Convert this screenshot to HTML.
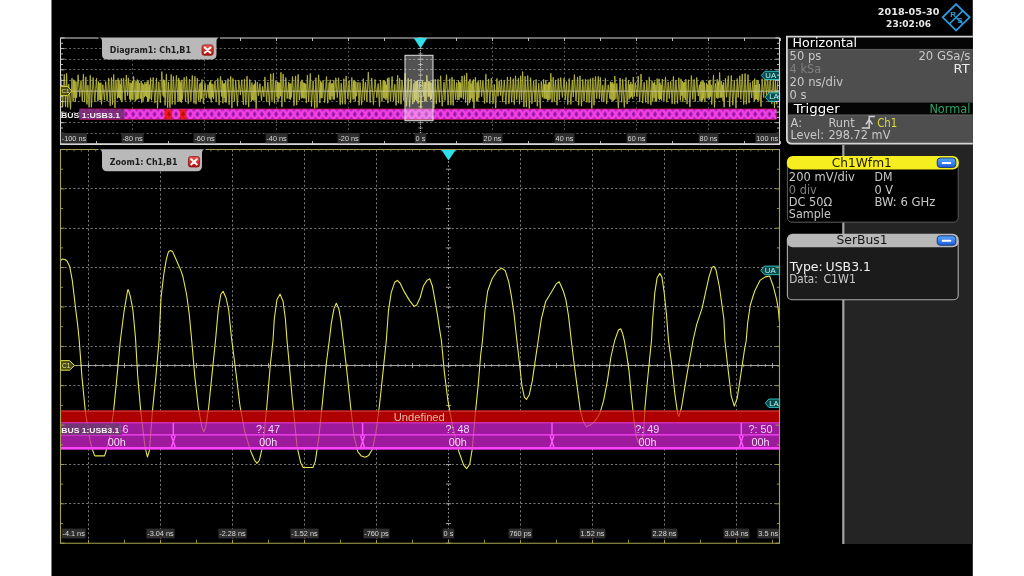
<!DOCTYPE html>
<html lang="en"><head><meta charset="utf-8"><title>Oscilloscope USB3.1 decode</title>
<style>
html,body{margin:0;padding:0;background:#fff;}
body{width:1024px;height:576px;overflow:hidden;position:relative;}
svg{position:absolute;left:0;top:0;display:block;will-change:transform;transform:translateZ(0);}
text{font-family:"DejaVu Sans","Liberation Sans",sans-serif;}
.ar{font-family:"Liberation Sans","DejaVu Sans",sans-serif;}
.b{font-weight:bold;}
</style></head><body>
<svg width="1024" height="576" viewBox="0 0 1024 576">
<defs>
<pattern id="dia" x="79.5" y="109.4" width="7.15" height="9.6" patternUnits="userSpaceOnUse"><rect width="7.15" height="9.6" fill="#f040e8"/><path d="M3.575 1.7 L5.6 4.8 L3.575 7.9 L1.55 4.8 Z" fill="#9c169e"/><path d="M-2 0 L2 0 L0 2.7 Z M5.15 0 L9.15 0 L7.15 2.7 Z M-2 9.6 L2 9.6 L0 6.9 Z M5.15 9.6 L9.15 9.6 L7.15 6.9 Z" fill="#b422b6"/></pattern>
<pattern id="diar" x="79.5" y="109.4" width="7.15" height="9.6" patternUnits="userSpaceOnUse"><rect width="7.15" height="9.6" fill="#ee1c1c"/><path d="M3.575 1.7 L5.6 4.8 L3.575 7.9 L1.55 4.8 Z" fill="#b40c0c"/><path d="M-2 0 L2 0 L0 2.7 Z M5.15 0 L9.15 0 L7.15 2.7 Z M-2 9.6 L2 9.6 L0 6.9 Z M5.15 9.6 L9.15 9.6 L7.15 6.9 Z" fill="#c81414"/></pattern>
<linearGradient id="redg" x1="0" y1="0" x2="0" y2="1"><stop offset="0" stop-color="#f05a50"/><stop offset="1" stop-color="#b00808"/></linearGradient>
<linearGradient id="blug" x1="0" y1="0" x2="0" y2="1"><stop offset="0" stop-color="#58a8ff"/><stop offset="1" stop-color="#1c5ee0"/></linearGradient>
<clipPath id="c1"><rect x="60" y="37" width="720" height="107"/></clipPath>
<clipPath id="c2"><rect x="60" y="149" width="720" height="395"/></clipPath>
</defs>
<rect x="0" y="0" width="1024" height="576" fill="#ffffff"/>
<rect x="51.5" y="0" width="921.3" height="576" fill="#000000"/>
<g id="diagram1">
<line x1="60.5" y1="48.5" x2="779.5" y2="48.5" stroke="#7c7c7c" stroke-width="1" stroke-dasharray="2 2.3" opacity="0.85"/>
<line x1="60.5" y1="59.5" x2="779.5" y2="59.5" stroke="#7c7c7c" stroke-width="1" stroke-dasharray="2 2.3" opacity="0.85"/>
<line x1="60.5" y1="69.5" x2="779.5" y2="69.5" stroke="#7c7c7c" stroke-width="1" stroke-dasharray="2 2.3" opacity="0.85"/>
<line x1="60.5" y1="80.5" x2="779.5" y2="80.5" stroke="#7c7c7c" stroke-width="1" stroke-dasharray="2 2.3" opacity="0.85"/>
<line x1="60.5" y1="90.5" x2="779.5" y2="90.5" stroke="#7c7c7c" stroke-width="1" stroke-dasharray="2 2.3" opacity="0.85"/>
<line x1="60.5" y1="101.5" x2="779.5" y2="101.5" stroke="#7c7c7c" stroke-width="1" stroke-dasharray="2 2.3" opacity="0.85"/>
<line x1="60.5" y1="112.5" x2="779.5" y2="112.5" stroke="#7c7c7c" stroke-width="1" stroke-dasharray="2 2.3" opacity="0.85"/>
<line x1="60.5" y1="122.5" x2="779.5" y2="122.5" stroke="#7c7c7c" stroke-width="1" stroke-dasharray="2 2.3" opacity="0.85"/>
<line x1="60.5" y1="133.5" x2="779.5" y2="133.5" stroke="#7c7c7c" stroke-width="1" stroke-dasharray="2 2.3" opacity="0.85"/>
<line x1="132.5" y1="38.0" x2="132.5" y2="144.1" stroke="#7c7c7c" stroke-width="1" stroke-dasharray="1.8 2.5" opacity="0.75"/>
<line x1="204.5" y1="38.0" x2="204.5" y2="144.1" stroke="#7c7c7c" stroke-width="1" stroke-dasharray="1.8 2.5" opacity="0.75"/>
<line x1="276.5" y1="38.0" x2="276.5" y2="144.1" stroke="#7c7c7c" stroke-width="1" stroke-dasharray="1.8 2.5" opacity="0.75"/>
<line x1="348.5" y1="38.0" x2="348.5" y2="144.1" stroke="#7c7c7c" stroke-width="1" stroke-dasharray="1.8 2.5" opacity="0.75"/>
<line x1="420.5" y1="48.0" x2="420.5" y2="144.1" stroke="#b0b0b0" stroke-width="1" stroke-dasharray="1.2 0.9"/>
<line x1="418.3" y1="38" x2="422.7" y2="38" stroke="#bcbcbc" stroke-width="0.8"/>
<line x1="418.3" y1="43.3" x2="422.7" y2="43.3" stroke="#bcbcbc" stroke-width="0.8"/>
<line x1="418.3" y1="48.6" x2="422.7" y2="48.6" stroke="#bcbcbc" stroke-width="0.8"/>
<line x1="418.3" y1="53.9" x2="422.7" y2="53.9" stroke="#bcbcbc" stroke-width="0.8"/>
<line x1="418.3" y1="59.2" x2="422.7" y2="59.2" stroke="#bcbcbc" stroke-width="0.8"/>
<line x1="418.3" y1="64.5" x2="422.7" y2="64.5" stroke="#bcbcbc" stroke-width="0.8"/>
<line x1="418.3" y1="69.8" x2="422.7" y2="69.8" stroke="#bcbcbc" stroke-width="0.8"/>
<line x1="418.3" y1="75.1" x2="422.7" y2="75.1" stroke="#bcbcbc" stroke-width="0.8"/>
<line x1="418.3" y1="80.4" x2="422.7" y2="80.4" stroke="#bcbcbc" stroke-width="0.8"/>
<line x1="418.3" y1="85.7" x2="422.7" y2="85.7" stroke="#bcbcbc" stroke-width="0.8"/>
<line x1="418.3" y1="91" x2="422.7" y2="91" stroke="#bcbcbc" stroke-width="0.8"/>
<line x1="418.3" y1="96.2" x2="422.7" y2="96.2" stroke="#bcbcbc" stroke-width="0.8"/>
<line x1="418.3" y1="101.5" x2="422.7" y2="101.5" stroke="#bcbcbc" stroke-width="0.8"/>
<line x1="418.3" y1="106.8" x2="422.7" y2="106.8" stroke="#bcbcbc" stroke-width="0.8"/>
<line x1="418.3" y1="112.1" x2="422.7" y2="112.1" stroke="#bcbcbc" stroke-width="0.8"/>
<line x1="418.3" y1="117.4" x2="422.7" y2="117.4" stroke="#bcbcbc" stroke-width="0.8"/>
<line x1="418.3" y1="122.7" x2="422.7" y2="122.7" stroke="#bcbcbc" stroke-width="0.8"/>
<line x1="418.3" y1="128" x2="422.7" y2="128" stroke="#bcbcbc" stroke-width="0.8"/>
<line x1="418.3" y1="133.3" x2="422.7" y2="133.3" stroke="#bcbcbc" stroke-width="0.8"/>
<line x1="418.3" y1="138.6" x2="422.7" y2="138.6" stroke="#bcbcbc" stroke-width="0.8"/>
<line x1="418.3" y1="143.9" x2="422.7" y2="143.9" stroke="#bcbcbc" stroke-width="0.8"/>
<line x1="492.5" y1="38.0" x2="492.5" y2="144.1" stroke="#7c7c7c" stroke-width="1" stroke-dasharray="1.8 2.5" opacity="0.75"/>
<line x1="564.5" y1="38.0" x2="564.5" y2="144.1" stroke="#7c7c7c" stroke-width="1" stroke-dasharray="1.8 2.5" opacity="0.75"/>
<line x1="636.5" y1="38.0" x2="636.5" y2="144.1" stroke="#7c7c7c" stroke-width="1" stroke-dasharray="1.8 2.5" opacity="0.75"/>
<line x1="708.5" y1="38.0" x2="708.5" y2="144.1" stroke="#7c7c7c" stroke-width="1" stroke-dasharray="1.8 2.5" opacity="0.75"/>
<g clip-path="url(#c1)"><path d="M60.9 77.5 L62.6 106.9 L64.3 74.4 L65.5 106.7 L66.6 73.4 L67.7 107.3 L68.8 84.2 L70.5 109.3 L72 78.2 L73.1 101.5 L73.7 79.8 L74.2 97.5 L74.8 81 L75.3 101.7 L76 81.8 L76.6 97.7 L78.1 74.9 L79.7 96.7 L81 80.6 L82.3 101.2 L83.4 74.2 L84.6 102 L85.9 76.9 L86.9 104.3 L87.9 85.1 L89.1 107.2 L90.3 75.4 L91.4 107.2 L93.1 77.6 L94.8 101.7 L96.5 78.3 L97.9 101.2 L98.5 81.7 L99.1 99.8 L99.8 83 L100.5 100 L100.9 82.8 L101.5 104.2 L102.8 84.7 L104.4 99.8 L105.7 81.6 L107.1 101 L108.7 78.1 L110.2 105.8 L111.5 77.7 L112.5 104.6 L113.7 74.5 L115 107.8 L115.9 80 L117.5 98.2 L118.1 78.3 L118.6 97.3 L119.1 80.3 L119.7 98 L120.3 84.4 L120.7 100 L121.3 78.5 L121.9 102 L123.6 78.2 L125.2 100.3 L126.4 75.1 L127.5 95.6 L128.4 78 L129.6 99.2 L130.1 82.6 L130.7 100.9 L131.3 83.2 L131.9 99.1 L132.4 80.9 L133 99.8 L133.6 76.4 L135.3 101.1 L135.9 81.3 L136.6 99.8 L137.2 79.6 L137.7 98.9 L138.2 80.8 L138.8 98.7 L139.3 83.1 L140.6 98.5 L141.2 81 L141.7 102.8 L142.4 83.4 L143.1 100.8 L143.7 84.6 L144.3 97.1 L144.9 82.3 L145.5 96 L146 84 L146.6 96.9 L147 81.8 L147.6 101.4 L148.1 80.5 L148.7 101.4 L149.3 84.8 L149.8 98.8 L150.5 77.8 L151.5 100.1 L153.2 77.6 L154.9 102.9 L156.5 78.1 L157.5 108.2 L158.8 81.9 L160.4 102.5 L161.8 71.7 L163 95.5 L163.5 79.7 L164 97.3 L164.6 80.6 L165.1 105.2 L166.4 74.2 L167.6 107.6 L168.5 82.2 L170 107.7 L171.2 74.5 L172.2 104.3 L173.4 76.4 L175 104.4 L176.4 75.5 L178 101.6 L178.7 78.1 L179.3 101.2 L179.8 80.3 L180.4 101.9 L180.8 82.6 L181.4 102.6 L181.9 79.9 L182.4 99.5 L184.2 77.4 L185.5 101.3 L186.5 76.6 L188.3 103.6 L189.4 79.3 L190.9 100.7 L192.3 75.5 L194 103.2 L194.9 76.3 L196 104.1 L197.3 78.4 L198.5 100.6 L199.8 83.8 L200.3 101.8 L201 82.7 L201.6 98.6 L202 79.6 L203.4 103.7 L205 83.2 L206.3 98 L208 84.7 L209 97.5 L209.6 82.4 L210.1 98.9 L210.7 80.4 L211.2 102.3 L211.9 83.7 L212.4 97 L212.9 84.4 L213.5 98.9 L215 80.9 L216.2 101.9 L217.8 78.4 L219.1 104.9 L220.5 76.5 L221.8 96.5 L222.3 80.6 L222.9 103.2 L223.5 83.7 L224.2 97.7 L224.6 83.3 L225.2 102.1 L225.8 80.6 L226.2 102.4 L228 78.7 L229.1 104.6 L230.7 76.3 L231.9 108 L232.9 78.4 L234.4 101.3 L235.7 80.1 L237.4 106.1 L238.8 80 L240.4 95 L241.7 79.9 L243.4 104.5 L244.4 79.2 L245.9 104.7 L247 76.2 L248.7 107 L249.7 79.6 L251.4 101 L251.9 82.7 L252.5 99.9 L253.2 85.5 L253.8 100.5 L254.3 83.9 L255 100.1 L255.4 80.9 L256.1 108.9 L257.3 82.1 L258.6 95.6 L259.9 83.6 L261.5 100.4 L262.5 86.4 L263.9 96.7 L264.9 77 L266.6 101.5 L267.8 82.3 L269.5 105.3 L270.7 73.9 L272 100.6 L273.4 73.3 L274.4 103.2 L275.8 80.8 L277 97.3 L277.5 81.9 L278 101.9 L278.7 82.5 L279.1 98.3 L279.8 82.9 L280.5 96.1 L280.9 72.4 L281.9 106.9 L283.1 74.1 L284.7 101.4 L285.8 77.7 L287.2 98.4 L288.7 82.2 L289.2 99 L289.8 83.6 L290.4 99.7 L290.9 83.7 L291.3 97.3 L292.5 76.5 L294 105.7 L295.6 76 L296.6 105 L298.2 74.4 L299.3 100.1 L301 81.4 L301.4 98.3 L302 79.8 L302.7 97.6 L303.2 82.6 L303.8 98.3 L304.4 83.2 L305 98.2 L305.6 83.8 L306.3 102.9 L307.4 75.1 L308.6 101.7 L310.3 73.5 L311.5 106.4 L313.1 80.9 L314.7 108.6 L315.9 77.8 L317 107.5 L318.6 74.9 L319.9 103 L320.6 81.2 L321 97.9 L321.5 82.7 L322 98.1 L323 80.6 L324.7 102.5 L326.5 76.6 L327.7 103.1 L329.1 82.6 L329.7 99.3 L330.2 79.9 L330.8 100.1 L331.4 83.7 L332 96.1 L332.7 83.3 L333.2 99.3 L333.8 80.4 L334.3 99.3 L335.8 77.9 L337.3 97.6 L338.5 77.9 L340.2 104.6 L341.2 83.2 L342.5 104.1 L343.8 78.9 L345.2 104.2 L346.1 76 L347.9 98.7 L349.1 81 L350.6 102.6 L351.8 77.6 L353.1 99.4 L353.6 80.9 L354.1 98.4 L354.7 80.6 L355.3 101.3 L355.9 81.9 L356.5 96.2 L358 82.3 L359.1 105.2 L360 82.7 L361.6 104.5 L363.3 78.7 L364.4 100.2 L365.5 82.1 L366.9 101.4 L368.3 72.2 L370.1 102.4 L371.7 78 L373.4 104.6 L375 79.6 L376.8 97.5 L378.2 83.7 L379.5 106.6 L380.5 80 L382 101.4 L383.2 80.4 L383.7 97.9 L384.3 80.6 L384.8 98.4 L385.3 81.7 L385.9 99.9 L386.4 84.9 L386.9 97.8 L387.4 78.4 L387.9 103.1 L388.9 77.6 L390.5 101.2 L392.1 76.6 L393.5 101 L394.8 84.3 L396.1 105.4 L397.6 75.4 L398.6 103.1 L399.6 78.3 L401 104.1 L402 80 L403.7 100.5 L405 73.2 L406.5 106.1 L408.2 78.6 L409.6 107.1 L411.1 79.1 L412.8 104 L413.9 83.5 L414.4 101.5 L415.1 81.4 L415.7 99.7 L416.3 81.2 L416.8 101.2 L417.4 80.5 L418.1 103.5 L419.3 81.6 L420.9 108.6 L422.4 80.9 L423.8 96.5 L424.2 82.2 L424.9 101.6 L425.6 82 L426.1 100.9 L426.8 75.2 L428.2 96.7 L428.7 81.3 L429.2 96.4 L429.8 81.6 L430.5 99.8 L431 82.8 L431.5 98.7 L433 79.8 L433.9 108.5 L435.2 79.3 L436.3 103.9 L437.9 79.4 L439.4 102.2 L440.6 75.9 L442.2 106.1 L444 82.3 L445 100.3 L446.5 74.8 L448.1 105 L449.8 78.8 L450.9 104.9 L452 77.1 L453.2 105.3 L454.2 79.7 L455.7 99.5 L456.7 82.5 L457.8 99.9 L458.5 80.3 L459.1 99.7 L459.7 82.1 L460.1 97.2 L460.7 82.7 L461.4 97.6 L462 76 L463.4 99.1 L464.4 75.6 L465.6 102.4 L466.7 73 L467.7 105.3 L468.9 81.3 L469.4 102.9 L470 79.1 L470.5 100.2 L471.1 83.6 L471.8 98.1 L472.3 80.8 L472.9 101.6 L473.4 79.5 L473.9 108.4 L475.4 77.4 L476.6 101.2 L477.2 82.5 L477.8 101.2 L478.3 80.9 L478.8 97.7 L480.5 80 L481.6 96.5 L482.9 80.9 L484.6 103.4 L485.9 74.2 L486.9 102.3 L488.6 79.1 L489.8 103.5 L491.4 78.1 L493.1 103.4 L494.3 84.4 L495.7 108.1 L496.9 78.5 L498 96.2 L499.2 81 L500.5 95.4 L501.5 79.8 L502.6 102 L504.3 80.4 L505.9 104.2 L507.4 77.1 L508.9 103.7 L510.5 77.2 L511.6 102.1 L513.3 78.8 L514.3 104.5 L515.5 75.9 L516.7 99.5 L518.4 78.4 L519.5 104.1 L520.6 75.9 L521.6 100.1 L522.6 71.7 L523.9 107 L525.1 76.4 L526.4 107 L527.7 75.7 L529.3 108.7 L530.6 77.8 L531.9 103.7 L533.6 80.9 L535.1 101.7 L536.1 79.5 L537.3 106.2 L538.7 83.2 L540.3 108.8 L541.3 81.5 L542.6 97.1 L543.6 79.4 L544.1 98.6 L544.6 84.4 L545.2 98.4 L545.8 80 L546.4 98.8 L547.1 84.5 L547.7 100.5 L548.4 82.8 L548.9 100.1 L549.4 82.1 L550.1 98.8 L550.8 73.3 L552.1 102.2 L553.2 77.4 L554.3 101.6 L555.5 80.2 L557 105 L558.2 78.6 L559.3 99.7 L560.7 77.7 L562.4 97.4 L564.1 78 L565.3 99.9 L566.5 81.8 L567.8 104.5 L569.2 78.5 L570.9 104.3 L572.3 80.1 L573.3 97 L574.4 74.7 L576 100.9 L577.6 77.1 L578.7 105.2 L580 75.9 L581.5 106 L582.8 79.5 L584 101.1 L585.5 79.1 L586.9 102.2 L588 79.6 L589.1 102.6 L590.4 78.6 L591.8 108.6 L592.9 77.9 L594 105.1 L595.5 76.5 L596.7 98.5 L598.3 76.4 L599.4 98.8 L600.4 77.6 L601.7 101.4 L602.8 85.2 L603.8 101.7 L605.4 78.4 L606.6 103.8 L608.2 84.9 L609.9 98.7 L610.4 81.8 L611 99.2 L611.5 82.7 L612.1 100.8 L612.7 82.3 L613.2 101.1 L613.8 84.1 L614.3 99.7 L614.8 76.1 L615.9 98.9 L616.8 83.5 L618.4 108.1 L620.1 78 L621.7 102.2 L622.7 79.4 L624.3 107.4 L626 77.6 L627.1 104 L628.5 80.4 L629.1 99.3 L629.6 84.7 L630.3 97.7 L630.8 82 L631.4 96.6 L632.1 84.3 L632.7 98.8 L633.3 77 L634.3 96.4 L635.4 82.8 L637 96.8 L638.2 76.2 L639.7 102 L641 74 L642.7 103 L644.1 82.4 L645.7 102.3 L646.8 80.5 L648.1 103.7 L649.3 77.1 L650.9 104.8 L652.1 80.8 L652.7 101.4 L653.3 83.1 L654 97.7 L654.7 81.8 L655.3 101.1 L655.9 85.2 L656.6 101.5 L657.1 78.7 L658.4 98.5 L659 78.9 L659.5 100 L660 82.9 L660.5 98.8 L661.1 85 L661.6 100.4 L662.3 79 L663.9 100.9 L665.5 77.2 L666.8 102.1 L668.2 82.1 L669.3 98.4 L670.7 81.5 L672.2 103.6 L673.4 76.5 L674.7 103.9 L675.9 80.2 L677.5 103.3 L678.8 77.8 L680.4 100.4 L681 79.1 L681.7 95.5 L682.3 81.2 L682.8 101.9 L683.5 82.7 L684.1 97.6 L684.8 82 L685.3 100.1 L685.9 79.3 L687 104 L688.4 79.9 L689.9 106.9 L691.4 75.7 L692.8 99.2 L694.1 79.5 L695.2 101.5 L696.7 77.6 L698.3 96 L699.4 84.8 L700 101.3 L700.7 81.9 L701.4 101.5 L702 81.3 L702.6 100.4 L703.1 80.5 L703.7 98.3 L704.3 82.7 L704.8 101.8 L706.5 83.2 L707.1 98.2 L707.8 84.5 L708.4 97.6 L708.9 80.5 L709.5 99.1 L710 80.2 L710.7 96.5 L711.3 85 L711.7 104.4 L713.5 75.1 L714.5 107.3 L715.5 83.5 L716.6 97.7 L717.2 79.3 L717.8 98.5 L718.4 81.6 L719 97.7 L719.6 72.6 L720.7 97.6 L721.3 81.1 L721.7 97.4 L722.4 85 L723 100.8 L723.4 82.5 L724.1 107.2 L725.5 78.3 L726.6 97.1 L728.3 75.8 L729.7 106.9 L731.3 75.5 L732.8 105.1 L734.3 80.2 L736 108.2 L737.2 78.7 L738.2 97.4 L739.8 75.8 L740.8 99.3 L742.3 74 L743.7 104.5 L745.1 73.6 L746.3 104.1 L748 74.6 L749 102.9 L750.1 82.6 L751.7 97.8 L752.8 81 L754.3 101.1 L754.7 78.6 L755.3 99.3 L755.9 85 L756.4 99 L756.9 80 L757.5 100.2 L758.1 80.7 L758.8 100.7 L759.4 84 L761 106.6 L762.1 78.8 L763.7 97.5 L764.9 76.5 L766.5 96.4 L767.6 76.1 L768.9 101.9 L770.2 76 L771.8 103.8 L773.3 78.9 L774.5 108 L775.4 79.9 L776.8 104.1 L777.9 77" fill="none" stroke="#7c7c1c" stroke-width="1.2" stroke-linejoin="round" opacity="0.55"/>
<path d="M60.9 77.5 L62.6 106.9 L64.3 74.4 L65.5 106.7 L66.6 73.4 L67.7 107.3 L68.8 84.2 L70.5 109.3 L72 78.2 L73.1 101.5 L73.7 79.8 L74.2 97.5 L74.8 81 L75.3 101.7 L76 81.8 L76.6 97.7 L78.1 74.9 L79.7 96.7 L81 80.6 L82.3 101.2 L83.4 74.2 L84.6 102 L85.9 76.9 L86.9 104.3 L87.9 85.1 L89.1 107.2 L90.3 75.4 L91.4 107.2 L93.1 77.6 L94.8 101.7 L96.5 78.3 L97.9 101.2 L98.5 81.7 L99.1 99.8 L99.8 83 L100.5 100 L100.9 82.8 L101.5 104.2 L102.8 84.7 L104.4 99.8 L105.7 81.6 L107.1 101 L108.7 78.1 L110.2 105.8 L111.5 77.7 L112.5 104.6 L113.7 74.5 L115 107.8 L115.9 80 L117.5 98.2 L118.1 78.3 L118.6 97.3 L119.1 80.3 L119.7 98 L120.3 84.4 L120.7 100 L121.3 78.5 L121.9 102 L123.6 78.2 L125.2 100.3 L126.4 75.1 L127.5 95.6 L128.4 78 L129.6 99.2 L130.1 82.6 L130.7 100.9 L131.3 83.2 L131.9 99.1 L132.4 80.9 L133 99.8 L133.6 76.4 L135.3 101.1 L135.9 81.3 L136.6 99.8 L137.2 79.6 L137.7 98.9 L138.2 80.8 L138.8 98.7 L139.3 83.1 L140.6 98.5 L141.2 81 L141.7 102.8 L142.4 83.4 L143.1 100.8 L143.7 84.6 L144.3 97.1 L144.9 82.3 L145.5 96 L146 84 L146.6 96.9 L147 81.8 L147.6 101.4 L148.1 80.5 L148.7 101.4 L149.3 84.8 L149.8 98.8 L150.5 77.8 L151.5 100.1 L153.2 77.6 L154.9 102.9 L156.5 78.1 L157.5 108.2 L158.8 81.9 L160.4 102.5 L161.8 71.7 L163 95.5 L163.5 79.7 L164 97.3 L164.6 80.6 L165.1 105.2 L166.4 74.2 L167.6 107.6 L168.5 82.2 L170 107.7 L171.2 74.5 L172.2 104.3 L173.4 76.4 L175 104.4 L176.4 75.5 L178 101.6 L178.7 78.1 L179.3 101.2 L179.8 80.3 L180.4 101.9 L180.8 82.6 L181.4 102.6 L181.9 79.9 L182.4 99.5 L184.2 77.4 L185.5 101.3 L186.5 76.6 L188.3 103.6 L189.4 79.3 L190.9 100.7 L192.3 75.5 L194 103.2 L194.9 76.3 L196 104.1 L197.3 78.4 L198.5 100.6 L199.8 83.8 L200.3 101.8 L201 82.7 L201.6 98.6 L202 79.6 L203.4 103.7 L205 83.2 L206.3 98 L208 84.7 L209 97.5 L209.6 82.4 L210.1 98.9 L210.7 80.4 L211.2 102.3 L211.9 83.7 L212.4 97 L212.9 84.4 L213.5 98.9 L215 80.9 L216.2 101.9 L217.8 78.4 L219.1 104.9 L220.5 76.5 L221.8 96.5 L222.3 80.6 L222.9 103.2 L223.5 83.7 L224.2 97.7 L224.6 83.3 L225.2 102.1 L225.8 80.6 L226.2 102.4 L228 78.7 L229.1 104.6 L230.7 76.3 L231.9 108 L232.9 78.4 L234.4 101.3 L235.7 80.1 L237.4 106.1 L238.8 80 L240.4 95 L241.7 79.9 L243.4 104.5 L244.4 79.2 L245.9 104.7 L247 76.2 L248.7 107 L249.7 79.6 L251.4 101 L251.9 82.7 L252.5 99.9 L253.2 85.5 L253.8 100.5 L254.3 83.9 L255 100.1 L255.4 80.9 L256.1 108.9 L257.3 82.1 L258.6 95.6 L259.9 83.6 L261.5 100.4 L262.5 86.4 L263.9 96.7 L264.9 77 L266.6 101.5 L267.8 82.3 L269.5 105.3 L270.7 73.9 L272 100.6 L273.4 73.3 L274.4 103.2 L275.8 80.8 L277 97.3 L277.5 81.9 L278 101.9 L278.7 82.5 L279.1 98.3 L279.8 82.9 L280.5 96.1 L280.9 72.4 L281.9 106.9 L283.1 74.1 L284.7 101.4 L285.8 77.7 L287.2 98.4 L288.7 82.2 L289.2 99 L289.8 83.6 L290.4 99.7 L290.9 83.7 L291.3 97.3 L292.5 76.5 L294 105.7 L295.6 76 L296.6 105 L298.2 74.4 L299.3 100.1 L301 81.4 L301.4 98.3 L302 79.8 L302.7 97.6 L303.2 82.6 L303.8 98.3 L304.4 83.2 L305 98.2 L305.6 83.8 L306.3 102.9 L307.4 75.1 L308.6 101.7 L310.3 73.5 L311.5 106.4 L313.1 80.9 L314.7 108.6 L315.9 77.8 L317 107.5 L318.6 74.9 L319.9 103 L320.6 81.2 L321 97.9 L321.5 82.7 L322 98.1 L323 80.6 L324.7 102.5 L326.5 76.6 L327.7 103.1 L329.1 82.6 L329.7 99.3 L330.2 79.9 L330.8 100.1 L331.4 83.7 L332 96.1 L332.7 83.3 L333.2 99.3 L333.8 80.4 L334.3 99.3 L335.8 77.9 L337.3 97.6 L338.5 77.9 L340.2 104.6 L341.2 83.2 L342.5 104.1 L343.8 78.9 L345.2 104.2 L346.1 76 L347.9 98.7 L349.1 81 L350.6 102.6 L351.8 77.6 L353.1 99.4 L353.6 80.9 L354.1 98.4 L354.7 80.6 L355.3 101.3 L355.9 81.9 L356.5 96.2 L358 82.3 L359.1 105.2 L360 82.7 L361.6 104.5 L363.3 78.7 L364.4 100.2 L365.5 82.1 L366.9 101.4 L368.3 72.2 L370.1 102.4 L371.7 78 L373.4 104.6 L375 79.6 L376.8 97.5 L378.2 83.7 L379.5 106.6 L380.5 80 L382 101.4 L383.2 80.4 L383.7 97.9 L384.3 80.6 L384.8 98.4 L385.3 81.7 L385.9 99.9 L386.4 84.9 L386.9 97.8 L387.4 78.4 L387.9 103.1 L388.9 77.6 L390.5 101.2 L392.1 76.6 L393.5 101 L394.8 84.3 L396.1 105.4 L397.6 75.4 L398.6 103.1 L399.6 78.3 L401 104.1 L402 80 L403.7 100.5 L405 73.2 L406.5 106.1 L408.2 78.6 L409.6 107.1 L411.1 79.1 L412.8 104 L413.9 83.5 L414.4 101.5 L415.1 81.4 L415.7 99.7 L416.3 81.2 L416.8 101.2 L417.4 80.5 L418.1 103.5 L419.3 81.6 L420.9 108.6 L422.4 80.9 L423.8 96.5 L424.2 82.2 L424.9 101.6 L425.6 82 L426.1 100.9 L426.8 75.2 L428.2 96.7 L428.7 81.3 L429.2 96.4 L429.8 81.6 L430.5 99.8 L431 82.8 L431.5 98.7 L433 79.8 L433.9 108.5 L435.2 79.3 L436.3 103.9 L437.9 79.4 L439.4 102.2 L440.6 75.9 L442.2 106.1 L444 82.3 L445 100.3 L446.5 74.8 L448.1 105 L449.8 78.8 L450.9 104.9 L452 77.1 L453.2 105.3 L454.2 79.7 L455.7 99.5 L456.7 82.5 L457.8 99.9 L458.5 80.3 L459.1 99.7 L459.7 82.1 L460.1 97.2 L460.7 82.7 L461.4 97.6 L462 76 L463.4 99.1 L464.4 75.6 L465.6 102.4 L466.7 73 L467.7 105.3 L468.9 81.3 L469.4 102.9 L470 79.1 L470.5 100.2 L471.1 83.6 L471.8 98.1 L472.3 80.8 L472.9 101.6 L473.4 79.5 L473.9 108.4 L475.4 77.4 L476.6 101.2 L477.2 82.5 L477.8 101.2 L478.3 80.9 L478.8 97.7 L480.5 80 L481.6 96.5 L482.9 80.9 L484.6 103.4 L485.9 74.2 L486.9 102.3 L488.6 79.1 L489.8 103.5 L491.4 78.1 L493.1 103.4 L494.3 84.4 L495.7 108.1 L496.9 78.5 L498 96.2 L499.2 81 L500.5 95.4 L501.5 79.8 L502.6 102 L504.3 80.4 L505.9 104.2 L507.4 77.1 L508.9 103.7 L510.5 77.2 L511.6 102.1 L513.3 78.8 L514.3 104.5 L515.5 75.9 L516.7 99.5 L518.4 78.4 L519.5 104.1 L520.6 75.9 L521.6 100.1 L522.6 71.7 L523.9 107 L525.1 76.4 L526.4 107 L527.7 75.7 L529.3 108.7 L530.6 77.8 L531.9 103.7 L533.6 80.9 L535.1 101.7 L536.1 79.5 L537.3 106.2 L538.7 83.2 L540.3 108.8 L541.3 81.5 L542.6 97.1 L543.6 79.4 L544.1 98.6 L544.6 84.4 L545.2 98.4 L545.8 80 L546.4 98.8 L547.1 84.5 L547.7 100.5 L548.4 82.8 L548.9 100.1 L549.4 82.1 L550.1 98.8 L550.8 73.3 L552.1 102.2 L553.2 77.4 L554.3 101.6 L555.5 80.2 L557 105 L558.2 78.6 L559.3 99.7 L560.7 77.7 L562.4 97.4 L564.1 78 L565.3 99.9 L566.5 81.8 L567.8 104.5 L569.2 78.5 L570.9 104.3 L572.3 80.1 L573.3 97 L574.4 74.7 L576 100.9 L577.6 77.1 L578.7 105.2 L580 75.9 L581.5 106 L582.8 79.5 L584 101.1 L585.5 79.1 L586.9 102.2 L588 79.6 L589.1 102.6 L590.4 78.6 L591.8 108.6 L592.9 77.9 L594 105.1 L595.5 76.5 L596.7 98.5 L598.3 76.4 L599.4 98.8 L600.4 77.6 L601.7 101.4 L602.8 85.2 L603.8 101.7 L605.4 78.4 L606.6 103.8 L608.2 84.9 L609.9 98.7 L610.4 81.8 L611 99.2 L611.5 82.7 L612.1 100.8 L612.7 82.3 L613.2 101.1 L613.8 84.1 L614.3 99.7 L614.8 76.1 L615.9 98.9 L616.8 83.5 L618.4 108.1 L620.1 78 L621.7 102.2 L622.7 79.4 L624.3 107.4 L626 77.6 L627.1 104 L628.5 80.4 L629.1 99.3 L629.6 84.7 L630.3 97.7 L630.8 82 L631.4 96.6 L632.1 84.3 L632.7 98.8 L633.3 77 L634.3 96.4 L635.4 82.8 L637 96.8 L638.2 76.2 L639.7 102 L641 74 L642.7 103 L644.1 82.4 L645.7 102.3 L646.8 80.5 L648.1 103.7 L649.3 77.1 L650.9 104.8 L652.1 80.8 L652.7 101.4 L653.3 83.1 L654 97.7 L654.7 81.8 L655.3 101.1 L655.9 85.2 L656.6 101.5 L657.1 78.7 L658.4 98.5 L659 78.9 L659.5 100 L660 82.9 L660.5 98.8 L661.1 85 L661.6 100.4 L662.3 79 L663.9 100.9 L665.5 77.2 L666.8 102.1 L668.2 82.1 L669.3 98.4 L670.7 81.5 L672.2 103.6 L673.4 76.5 L674.7 103.9 L675.9 80.2 L677.5 103.3 L678.8 77.8 L680.4 100.4 L681 79.1 L681.7 95.5 L682.3 81.2 L682.8 101.9 L683.5 82.7 L684.1 97.6 L684.8 82 L685.3 100.1 L685.9 79.3 L687 104 L688.4 79.9 L689.9 106.9 L691.4 75.7 L692.8 99.2 L694.1 79.5 L695.2 101.5 L696.7 77.6 L698.3 96 L699.4 84.8 L700 101.3 L700.7 81.9 L701.4 101.5 L702 81.3 L702.6 100.4 L703.1 80.5 L703.7 98.3 L704.3 82.7 L704.8 101.8 L706.5 83.2 L707.1 98.2 L707.8 84.5 L708.4 97.6 L708.9 80.5 L709.5 99.1 L710 80.2 L710.7 96.5 L711.3 85 L711.7 104.4 L713.5 75.1 L714.5 107.3 L715.5 83.5 L716.6 97.7 L717.2 79.3 L717.8 98.5 L718.4 81.6 L719 97.7 L719.6 72.6 L720.7 97.6 L721.3 81.1 L721.7 97.4 L722.4 85 L723 100.8 L723.4 82.5 L724.1 107.2 L725.5 78.3 L726.6 97.1 L728.3 75.8 L729.7 106.9 L731.3 75.5 L732.8 105.1 L734.3 80.2 L736 108.2 L737.2 78.7 L738.2 97.4 L739.8 75.8 L740.8 99.3 L742.3 74 L743.7 104.5 L745.1 73.6 L746.3 104.1 L748 74.6 L749 102.9 L750.1 82.6 L751.7 97.8 L752.8 81 L754.3 101.1 L754.7 78.6 L755.3 99.3 L755.9 85 L756.4 99 L756.9 80 L757.5 100.2 L758.1 80.7 L758.8 100.7 L759.4 84 L761 106.6 L762.1 78.8 L763.7 97.5 L764.9 76.5 L766.5 96.4 L767.6 76.1 L768.9 101.9 L770.2 76 L771.8 103.8 L773.3 78.9 L774.5 108 L775.4 79.9 L776.8 104.1 L777.9 77" fill="none" stroke="#cece46" stroke-width="0.62" stroke-linejoin="round"/></g>
<line x1="60.5" y1="91.3" x2="779.5" y2="91.3" stroke="#c8c8b0" stroke-width="0.9" opacity="0.75"/>
<rect x="79.5" y="108.6" width="697" height="11.2" fill="#c8145c"/>
<rect x="79.5" y="109.4" width="697" height="9.6" fill="url(#dia)"/>
<rect x="164.4" y="109.4" width="7.8" height="9.6" fill="url(#diar)"/>
<rect x="180" y="109.4" width="6.4" height="9.6" fill="url(#diar)"/>
<rect x="79.5" y="109.2" width="45" height="10" fill="#5a2a5a" opacity="0.72"/>
<text x="61" y="117.6" font-size="7.6" class="ar b" fill="#f4f4f4" textLength="59" lengthAdjust="spacingAndGlyphs">BUS 1:USB3.1</text>
<rect x="405" y="55.3" width="28" height="65.4" fill="#ffffff" fill-opacity="0.32" stroke="#e2e2e2" stroke-width="1"/>
<path d="M761.3 75.4 L764.9 71.3 L779.6 71.3 L779.6 79.5 L764.9 79.5 Z" fill="#0a4c4e" stroke="#36cccc" stroke-width="0.9"/>
<text x="765.3" y="77.7" font-size="6.3" class="ar" fill="#b0f6f6" textLength="10.8" lengthAdjust="spacingAndGlyphs">UA</text>
<path d="M765.2 97.1 L768.8 92.8 L779.6 92.8 L779.6 101.4 L768.8 101.4 Z" fill="#0a4c4e" stroke="#36cccc" stroke-width="0.9"/>
<text x="769.2" y="99.4" font-size="6.3" class="ar" fill="#b0f6f6" textLength="9.4" lengthAdjust="spacingAndGlyphs">LA</text>
<path d="M98.5 38.0 L60.5 38.0 L60.5 144.1 L779.5 144.1 L779.5 38.0 L220 38.0" fill="none" stroke="#d8d8d8" stroke-width="1.1"/>
<line x1="60.0" y1="144.1" x2="780.0" y2="144.1" stroke="#e8e8e8" stroke-width="1.2"/>
<line x1="60.5" y1="144.1" x2="60.5" y2="141.1" stroke="#cfcfcf" stroke-width="0.9"/>
<line x1="60.5" y1="38.0" x2="60.5" y2="41" stroke="#cfcfcf" stroke-width="0.9"/>
<line x1="96.5" y1="144.1" x2="96.5" y2="141.1" stroke="#cfcfcf" stroke-width="0.9"/>
<line x1="132.5" y1="144.1" x2="132.5" y2="141.1" stroke="#cfcfcf" stroke-width="0.9"/>
<line x1="168.5" y1="144.1" x2="168.5" y2="141.1" stroke="#cfcfcf" stroke-width="0.9"/>
<line x1="204.5" y1="144.1" x2="204.5" y2="141.1" stroke="#cfcfcf" stroke-width="0.9"/>
<line x1="240.5" y1="144.1" x2="240.5" y2="141.1" stroke="#cfcfcf" stroke-width="0.9"/>
<line x1="240.5" y1="38.0" x2="240.5" y2="41" stroke="#cfcfcf" stroke-width="0.9"/>
<line x1="276.5" y1="144.1" x2="276.5" y2="141.1" stroke="#cfcfcf" stroke-width="0.9"/>
<line x1="276.5" y1="38.0" x2="276.5" y2="41" stroke="#cfcfcf" stroke-width="0.9"/>
<line x1="312.5" y1="144.1" x2="312.5" y2="141.1" stroke="#cfcfcf" stroke-width="0.9"/>
<line x1="312.5" y1="38.0" x2="312.5" y2="41" stroke="#cfcfcf" stroke-width="0.9"/>
<line x1="348.5" y1="144.1" x2="348.5" y2="141.1" stroke="#cfcfcf" stroke-width="0.9"/>
<line x1="348.5" y1="38.0" x2="348.5" y2="41" stroke="#cfcfcf" stroke-width="0.9"/>
<line x1="384.5" y1="144.1" x2="384.5" y2="141.1" stroke="#cfcfcf" stroke-width="0.9"/>
<line x1="384.5" y1="38.0" x2="384.5" y2="41" stroke="#cfcfcf" stroke-width="0.9"/>
<line x1="420.5" y1="144.1" x2="420.5" y2="141.1" stroke="#cfcfcf" stroke-width="0.9"/>
<line x1="420.5" y1="38.0" x2="420.5" y2="41" stroke="#cfcfcf" stroke-width="0.9"/>
<line x1="456.5" y1="144.1" x2="456.5" y2="141.1" stroke="#cfcfcf" stroke-width="0.9"/>
<line x1="456.5" y1="38.0" x2="456.5" y2="41" stroke="#cfcfcf" stroke-width="0.9"/>
<line x1="492.5" y1="144.1" x2="492.5" y2="141.1" stroke="#cfcfcf" stroke-width="0.9"/>
<line x1="492.5" y1="38.0" x2="492.5" y2="41" stroke="#cfcfcf" stroke-width="0.9"/>
<line x1="528.5" y1="144.1" x2="528.5" y2="141.1" stroke="#cfcfcf" stroke-width="0.9"/>
<line x1="528.5" y1="38.0" x2="528.5" y2="41" stroke="#cfcfcf" stroke-width="0.9"/>
<line x1="564.5" y1="144.1" x2="564.5" y2="141.1" stroke="#cfcfcf" stroke-width="0.9"/>
<line x1="564.5" y1="38.0" x2="564.5" y2="41" stroke="#cfcfcf" stroke-width="0.9"/>
<line x1="600.5" y1="144.1" x2="600.5" y2="141.1" stroke="#cfcfcf" stroke-width="0.9"/>
<line x1="600.5" y1="38.0" x2="600.5" y2="41" stroke="#cfcfcf" stroke-width="0.9"/>
<line x1="636.5" y1="144.1" x2="636.5" y2="141.1" stroke="#cfcfcf" stroke-width="0.9"/>
<line x1="636.5" y1="38.0" x2="636.5" y2="41" stroke="#cfcfcf" stroke-width="0.9"/>
<line x1="672.5" y1="144.1" x2="672.5" y2="141.1" stroke="#cfcfcf" stroke-width="0.9"/>
<line x1="672.5" y1="38.0" x2="672.5" y2="41" stroke="#cfcfcf" stroke-width="0.9"/>
<line x1="708.5" y1="144.1" x2="708.5" y2="141.1" stroke="#cfcfcf" stroke-width="0.9"/>
<line x1="708.5" y1="38.0" x2="708.5" y2="41" stroke="#cfcfcf" stroke-width="0.9"/>
<line x1="744.5" y1="144.1" x2="744.5" y2="141.1" stroke="#cfcfcf" stroke-width="0.9"/>
<line x1="744.5" y1="38.0" x2="744.5" y2="41" stroke="#cfcfcf" stroke-width="0.9"/>
<line x1="780.5" y1="144.1" x2="780.5" y2="141.1" stroke="#cfcfcf" stroke-width="0.9"/>
<line x1="780.5" y1="38.0" x2="780.5" y2="41" stroke="#cfcfcf" stroke-width="0.9"/>
<line x1="60.5" y1="38" x2="64.5" y2="38" stroke="#cfcfcf" stroke-width="0.9"/>
<line x1="779.5" y1="38" x2="775.5" y2="38" stroke="#cfcfcf" stroke-width="0.9"/>
<line x1="60.5" y1="43.3" x2="63" y2="43.3" stroke="#cfcfcf" stroke-width="0.9"/>
<line x1="779.5" y1="43.3" x2="777" y2="43.3" stroke="#cfcfcf" stroke-width="0.9"/>
<line x1="60.5" y1="48.6" x2="64.5" y2="48.6" stroke="#cfcfcf" stroke-width="0.9"/>
<line x1="779.5" y1="48.6" x2="775.5" y2="48.6" stroke="#cfcfcf" stroke-width="0.9"/>
<line x1="60.5" y1="53.9" x2="63" y2="53.9" stroke="#cfcfcf" stroke-width="0.9"/>
<line x1="779.5" y1="53.9" x2="777" y2="53.9" stroke="#cfcfcf" stroke-width="0.9"/>
<line x1="60.5" y1="59.2" x2="64.5" y2="59.2" stroke="#cfcfcf" stroke-width="0.9"/>
<line x1="779.5" y1="59.2" x2="775.5" y2="59.2" stroke="#cfcfcf" stroke-width="0.9"/>
<line x1="60.5" y1="64.5" x2="63" y2="64.5" stroke="#cfcfcf" stroke-width="0.9"/>
<line x1="779.5" y1="64.5" x2="777" y2="64.5" stroke="#cfcfcf" stroke-width="0.9"/>
<line x1="60.5" y1="69.8" x2="64.5" y2="69.8" stroke="#cfcfcf" stroke-width="0.9"/>
<line x1="779.5" y1="69.8" x2="775.5" y2="69.8" stroke="#cfcfcf" stroke-width="0.9"/>
<line x1="60.5" y1="75.1" x2="63" y2="75.1" stroke="#cfcfcf" stroke-width="0.9"/>
<line x1="779.5" y1="75.1" x2="777" y2="75.1" stroke="#cfcfcf" stroke-width="0.9"/>
<line x1="60.5" y1="80.4" x2="64.5" y2="80.4" stroke="#cfcfcf" stroke-width="0.9"/>
<line x1="779.5" y1="80.4" x2="775.5" y2="80.4" stroke="#cfcfcf" stroke-width="0.9"/>
<line x1="60.5" y1="85.7" x2="63" y2="85.7" stroke="#cfcfcf" stroke-width="0.9"/>
<line x1="779.5" y1="85.7" x2="777" y2="85.7" stroke="#cfcfcf" stroke-width="0.9"/>
<line x1="60.5" y1="91" x2="64.5" y2="91" stroke="#cfcfcf" stroke-width="0.9"/>
<line x1="779.5" y1="91" x2="775.5" y2="91" stroke="#cfcfcf" stroke-width="0.9"/>
<line x1="60.5" y1="96.2" x2="63" y2="96.2" stroke="#cfcfcf" stroke-width="0.9"/>
<line x1="779.5" y1="96.2" x2="777" y2="96.2" stroke="#cfcfcf" stroke-width="0.9"/>
<line x1="60.5" y1="101.5" x2="64.5" y2="101.5" stroke="#cfcfcf" stroke-width="0.9"/>
<line x1="779.5" y1="101.5" x2="775.5" y2="101.5" stroke="#cfcfcf" stroke-width="0.9"/>
<line x1="60.5" y1="106.8" x2="63" y2="106.8" stroke="#cfcfcf" stroke-width="0.9"/>
<line x1="779.5" y1="106.8" x2="777" y2="106.8" stroke="#cfcfcf" stroke-width="0.9"/>
<line x1="60.5" y1="112.1" x2="64.5" y2="112.1" stroke="#cfcfcf" stroke-width="0.9"/>
<line x1="779.5" y1="112.1" x2="775.5" y2="112.1" stroke="#cfcfcf" stroke-width="0.9"/>
<line x1="60.5" y1="117.4" x2="63" y2="117.4" stroke="#cfcfcf" stroke-width="0.9"/>
<line x1="779.5" y1="117.4" x2="777" y2="117.4" stroke="#cfcfcf" stroke-width="0.9"/>
<line x1="60.5" y1="122.7" x2="64.5" y2="122.7" stroke="#cfcfcf" stroke-width="0.9"/>
<line x1="779.5" y1="122.7" x2="775.5" y2="122.7" stroke="#cfcfcf" stroke-width="0.9"/>
<line x1="60.5" y1="128" x2="63" y2="128" stroke="#cfcfcf" stroke-width="0.9"/>
<line x1="779.5" y1="128" x2="777" y2="128" stroke="#cfcfcf" stroke-width="0.9"/>
<line x1="60.5" y1="133.3" x2="64.5" y2="133.3" stroke="#cfcfcf" stroke-width="0.9"/>
<line x1="779.5" y1="133.3" x2="775.5" y2="133.3" stroke="#cfcfcf" stroke-width="0.9"/>
<line x1="60.5" y1="138.6" x2="63" y2="138.6" stroke="#cfcfcf" stroke-width="0.9"/>
<line x1="779.5" y1="138.6" x2="777" y2="138.6" stroke="#cfcfcf" stroke-width="0.9"/>
<line x1="60.5" y1="143.9" x2="64.5" y2="143.9" stroke="#cfcfcf" stroke-width="0.9"/>
<line x1="779.5" y1="143.9" x2="775.5" y2="143.9" stroke="#cfcfcf" stroke-width="0.9"/>
<path d="M60.5 86.4 L67.5 86.4 L71.8 91 L67.5 95.6 L60.5 95.6 Z" fill="#4a4a12" stroke="#d6d63a" stroke-width="1"/>
<text x="61.6" y="93.4" font-size="6.2" class="ar" fill="#e8e8a0">C1</text>
<path d="M413.8 38 L427.2 38 L420.5 48.4 Z" fill="#2fe0ea"/>
<rect x="60.9" y="133" width="26.1" height="10.2" fill="#2e2e2e"/>
<text x="61.8" y="140.6" class="ar" font-size="7.3" fill="#d8d8d8">-100 ns</text>
<rect x="121.5" y="133" width="22.1" height="10.2" fill="#2e2e2e"/>
<text x="122.4" y="140.6" class="ar" font-size="7.3" fill="#d8d8d8">-80 ns</text>
<rect x="193.5" y="133" width="22.1" height="10.2" fill="#2e2e2e"/>
<text x="194.4" y="140.6" class="ar" font-size="7.3" fill="#d8d8d8">-60 ns</text>
<rect x="265.5" y="133" width="22.1" height="10.2" fill="#2e2e2e"/>
<text x="266.4" y="140.6" class="ar" font-size="7.3" fill="#d8d8d8">-40 ns</text>
<rect x="337.5" y="133" width="22.1" height="10.2" fill="#2e2e2e"/>
<text x="338.4" y="140.6" class="ar" font-size="7.3" fill="#d8d8d8">-20 ns</text>
<rect x="414.7" y="133" width="11.5" height="10.2" fill="#2e2e2e"/>
<text x="415.6" y="140.6" class="ar" font-size="7.3" fill="#d8d8d8">0 s</text>
<rect x="482.7" y="133" width="19.7" height="10.2" fill="#2e2e2e"/>
<text x="483.6" y="140.6" class="ar" font-size="7.3" fill="#d8d8d8">20 ns</text>
<rect x="554.7" y="133" width="19.7" height="10.2" fill="#2e2e2e"/>
<text x="555.6" y="140.6" class="ar" font-size="7.3" fill="#d8d8d8">40 ns</text>
<rect x="626.7" y="133" width="19.7" height="10.2" fill="#2e2e2e"/>
<text x="627.6" y="140.6" class="ar" font-size="7.3" fill="#d8d8d8">60 ns</text>
<rect x="698.7" y="133" width="19.7" height="10.2" fill="#2e2e2e"/>
<text x="699.6" y="140.6" class="ar" font-size="7.3" fill="#d8d8d8">80 ns</text>
<rect x="755.4" y="133" width="23.7" height="10.2" fill="#2e2e2e"/>
<text x="756.3" y="140.6" class="ar" font-size="7.3" fill="#d8d8d8">100 ns</text>
<path d="M98.5 37.6 Q102.0 37.6 102.0 41.6 L102.0 54.4 Q102.0 59.4 107.5 59.4 L211 59.4 Q216.5 59.4 216.5 54.4 L216.5 41.6 Q216.5 37.6 220 37.6 Z" fill="#b9b9b9"/>
<text x="109.8" y="53.4" font-size="8.2" class="b" fill="#1c1c1c" textLength="81.2" lengthAdjust="spacingAndGlyphs">Diagram1: Ch1,B1</text>
<rect x="202" y="44.9" width="11.2" height="10.4" rx="2.2" fill="url(#redg)" stroke="#8a0a0a" stroke-width="0.7"/>
<path d="M204.8 47.5 L210.4 52.7 M210.4 47.5 L204.8 52.7" stroke="#ffffff" stroke-width="2" stroke-linecap="round"/>
</g>
<g id="zoom1">
<line x1="60.5" y1="188.5" x2="779.5" y2="188.5" stroke="#7c7c7c" stroke-width="1" stroke-dasharray="2 2.3"/>
<line x1="60.5" y1="228.5" x2="779.5" y2="228.5" stroke="#7c7c7c" stroke-width="1" stroke-dasharray="2 2.3"/>
<line x1="60.5" y1="267.5" x2="779.5" y2="267.5" stroke="#7c7c7c" stroke-width="1" stroke-dasharray="2 2.3"/>
<line x1="60.5" y1="306.5" x2="779.5" y2="306.5" stroke="#7c7c7c" stroke-width="1" stroke-dasharray="2 2.3"/>
<line x1="60.5" y1="346.5" x2="779.5" y2="346.5" stroke="#7c7c7c" stroke-width="1" stroke-dasharray="2 2.3"/>
<line x1="60.5" y1="385.5" x2="779.5" y2="385.5" stroke="#7c7c7c" stroke-width="1" stroke-dasharray="2 2.3"/>
<line x1="60.5" y1="425.5" x2="779.5" y2="425.5" stroke="#7c7c7c" stroke-width="1" stroke-dasharray="2 2.3"/>
<line x1="60.5" y1="464.5" x2="779.5" y2="464.5" stroke="#7c7c7c" stroke-width="1" stroke-dasharray="2 2.3"/>
<line x1="60.5" y1="503.5" x2="779.5" y2="503.5" stroke="#7c7c7c" stroke-width="1" stroke-dasharray="2 2.3"/>
<line x1="88.5" y1="149.5" x2="88.5" y2="543.2" stroke="#7c7c7c" stroke-width="1" stroke-dasharray="2 2.4"/>
<line x1="160.5" y1="149.5" x2="160.5" y2="543.2" stroke="#7c7c7c" stroke-width="1" stroke-dasharray="2 2.4"/>
<line x1="232.5" y1="149.5" x2="232.5" y2="543.2" stroke="#7c7c7c" stroke-width="1" stroke-dasharray="2 2.4"/>
<line x1="304.5" y1="149.5" x2="304.5" y2="543.2" stroke="#7c7c7c" stroke-width="1" stroke-dasharray="2 2.4"/>
<line x1="376.5" y1="149.5" x2="376.5" y2="543.2" stroke="#7c7c7c" stroke-width="1" stroke-dasharray="2 2.4"/>
<line x1="448.5" y1="149.5" x2="448.5" y2="543.2" stroke="#9c9c9c" stroke-width="1.1" stroke-dasharray="1.6 2.34"/>
<line x1="445.9" y1="149.5" x2="451.1" y2="149.5" stroke="#a8a8a8" stroke-width="0.9"/>
<line x1="445.9" y1="169.2" x2="451.1" y2="169.2" stroke="#a8a8a8" stroke-width="0.9"/>
<line x1="445.9" y1="188.9" x2="451.1" y2="188.9" stroke="#a8a8a8" stroke-width="0.9"/>
<line x1="445.9" y1="208.6" x2="451.1" y2="208.6" stroke="#a8a8a8" stroke-width="0.9"/>
<line x1="445.9" y1="228.2" x2="451.1" y2="228.2" stroke="#a8a8a8" stroke-width="0.9"/>
<line x1="445.9" y1="247.9" x2="451.1" y2="247.9" stroke="#a8a8a8" stroke-width="0.9"/>
<line x1="445.9" y1="267.6" x2="451.1" y2="267.6" stroke="#a8a8a8" stroke-width="0.9"/>
<line x1="445.9" y1="287.3" x2="451.1" y2="287.3" stroke="#a8a8a8" stroke-width="0.9"/>
<line x1="445.9" y1="307" x2="451.1" y2="307" stroke="#a8a8a8" stroke-width="0.9"/>
<line x1="445.9" y1="326.7" x2="451.1" y2="326.7" stroke="#a8a8a8" stroke-width="0.9"/>
<line x1="445.9" y1="346.4" x2="451.1" y2="346.4" stroke="#a8a8a8" stroke-width="0.9"/>
<line x1="445.9" y1="366" x2="451.1" y2="366" stroke="#a8a8a8" stroke-width="0.9"/>
<line x1="445.9" y1="385.7" x2="451.1" y2="385.7" stroke="#a8a8a8" stroke-width="0.9"/>
<line x1="445.9" y1="405.4" x2="451.1" y2="405.4" stroke="#a8a8a8" stroke-width="0.9"/>
<line x1="445.9" y1="425.1" x2="451.1" y2="425.1" stroke="#a8a8a8" stroke-width="0.9"/>
<line x1="445.9" y1="444.8" x2="451.1" y2="444.8" stroke="#a8a8a8" stroke-width="0.9"/>
<line x1="445.9" y1="464.5" x2="451.1" y2="464.5" stroke="#a8a8a8" stroke-width="0.9"/>
<line x1="445.9" y1="484.1" x2="451.1" y2="484.1" stroke="#a8a8a8" stroke-width="0.9"/>
<line x1="445.9" y1="503.8" x2="451.1" y2="503.8" stroke="#a8a8a8" stroke-width="0.9"/>
<line x1="445.9" y1="523.5" x2="451.1" y2="523.5" stroke="#a8a8a8" stroke-width="0.9"/>
<line x1="445.9" y1="543.2" x2="451.1" y2="543.2" stroke="#a8a8a8" stroke-width="0.9"/>
<line x1="520.5" y1="149.5" x2="520.5" y2="543.2" stroke="#7c7c7c" stroke-width="1" stroke-dasharray="2 2.4"/>
<line x1="592.5" y1="149.5" x2="592.5" y2="543.2" stroke="#7c7c7c" stroke-width="1" stroke-dasharray="2 2.4"/>
<line x1="664.5" y1="149.5" x2="664.5" y2="543.2" stroke="#7c7c7c" stroke-width="1" stroke-dasharray="2 2.4"/>
<line x1="736.5" y1="149.5" x2="736.5" y2="543.2" stroke="#7c7c7c" stroke-width="1" stroke-dasharray="2 2.4"/>
<line x1="60.5" y1="365.5" x2="779.5" y2="365.5" stroke="#b4b4b4" stroke-width="0.9"/>
<line x1="81.3" y1="364.2" x2="81.3" y2="366.8" stroke="#b4b4b4" stroke-width="0.9"/>
<line x1="88.5" y1="362.9" x2="88.5" y2="368.1" stroke="#b4b4b4" stroke-width="0.9"/>
<line x1="95.7" y1="364.2" x2="95.7" y2="366.8" stroke="#b4b4b4" stroke-width="0.9"/>
<line x1="102.9" y1="364.2" x2="102.9" y2="366.8" stroke="#b4b4b4" stroke-width="0.9"/>
<line x1="110.1" y1="364.2" x2="110.1" y2="366.8" stroke="#b4b4b4" stroke-width="0.9"/>
<line x1="117.3" y1="364.2" x2="117.3" y2="366.8" stroke="#b4b4b4" stroke-width="0.9"/>
<line x1="124.5" y1="362.9" x2="124.5" y2="368.1" stroke="#b4b4b4" stroke-width="0.9"/>
<line x1="131.7" y1="364.2" x2="131.7" y2="366.8" stroke="#b4b4b4" stroke-width="0.9"/>
<line x1="138.9" y1="364.2" x2="138.9" y2="366.8" stroke="#b4b4b4" stroke-width="0.9"/>
<line x1="146.1" y1="364.2" x2="146.1" y2="366.8" stroke="#b4b4b4" stroke-width="0.9"/>
<line x1="153.3" y1="364.2" x2="153.3" y2="366.8" stroke="#b4b4b4" stroke-width="0.9"/>
<line x1="160.5" y1="362.9" x2="160.5" y2="368.1" stroke="#b4b4b4" stroke-width="0.9"/>
<line x1="167.7" y1="364.2" x2="167.7" y2="366.8" stroke="#b4b4b4" stroke-width="0.9"/>
<line x1="174.9" y1="364.2" x2="174.9" y2="366.8" stroke="#b4b4b4" stroke-width="0.9"/>
<line x1="182.1" y1="364.2" x2="182.1" y2="366.8" stroke="#b4b4b4" stroke-width="0.9"/>
<line x1="189.3" y1="364.2" x2="189.3" y2="366.8" stroke="#b4b4b4" stroke-width="0.9"/>
<line x1="196.5" y1="362.9" x2="196.5" y2="368.1" stroke="#b4b4b4" stroke-width="0.9"/>
<line x1="203.7" y1="364.2" x2="203.7" y2="366.8" stroke="#b4b4b4" stroke-width="0.9"/>
<line x1="210.9" y1="364.2" x2="210.9" y2="366.8" stroke="#b4b4b4" stroke-width="0.9"/>
<line x1="218.1" y1="364.2" x2="218.1" y2="366.8" stroke="#b4b4b4" stroke-width="0.9"/>
<line x1="225.3" y1="364.2" x2="225.3" y2="366.8" stroke="#b4b4b4" stroke-width="0.9"/>
<line x1="232.5" y1="362.9" x2="232.5" y2="368.1" stroke="#b4b4b4" stroke-width="0.9"/>
<line x1="239.7" y1="364.2" x2="239.7" y2="366.8" stroke="#b4b4b4" stroke-width="0.9"/>
<line x1="246.9" y1="364.2" x2="246.9" y2="366.8" stroke="#b4b4b4" stroke-width="0.9"/>
<line x1="254.1" y1="364.2" x2="254.1" y2="366.8" stroke="#b4b4b4" stroke-width="0.9"/>
<line x1="261.3" y1="364.2" x2="261.3" y2="366.8" stroke="#b4b4b4" stroke-width="0.9"/>
<line x1="268.5" y1="362.9" x2="268.5" y2="368.1" stroke="#b4b4b4" stroke-width="0.9"/>
<line x1="275.7" y1="364.2" x2="275.7" y2="366.8" stroke="#b4b4b4" stroke-width="0.9"/>
<line x1="282.9" y1="364.2" x2="282.9" y2="366.8" stroke="#b4b4b4" stroke-width="0.9"/>
<line x1="290.1" y1="364.2" x2="290.1" y2="366.8" stroke="#b4b4b4" stroke-width="0.9"/>
<line x1="297.3" y1="364.2" x2="297.3" y2="366.8" stroke="#b4b4b4" stroke-width="0.9"/>
<line x1="304.5" y1="362.9" x2="304.5" y2="368.1" stroke="#b4b4b4" stroke-width="0.9"/>
<line x1="311.7" y1="364.2" x2="311.7" y2="366.8" stroke="#b4b4b4" stroke-width="0.9"/>
<line x1="318.9" y1="364.2" x2="318.9" y2="366.8" stroke="#b4b4b4" stroke-width="0.9"/>
<line x1="326.1" y1="364.2" x2="326.1" y2="366.8" stroke="#b4b4b4" stroke-width="0.9"/>
<line x1="333.3" y1="364.2" x2="333.3" y2="366.8" stroke="#b4b4b4" stroke-width="0.9"/>
<line x1="340.5" y1="362.9" x2="340.5" y2="368.1" stroke="#b4b4b4" stroke-width="0.9"/>
<line x1="347.7" y1="364.2" x2="347.7" y2="366.8" stroke="#b4b4b4" stroke-width="0.9"/>
<line x1="354.9" y1="364.2" x2="354.9" y2="366.8" stroke="#b4b4b4" stroke-width="0.9"/>
<line x1="362.1" y1="364.2" x2="362.1" y2="366.8" stroke="#b4b4b4" stroke-width="0.9"/>
<line x1="369.3" y1="364.2" x2="369.3" y2="366.8" stroke="#b4b4b4" stroke-width="0.9"/>
<line x1="376.5" y1="362.9" x2="376.5" y2="368.1" stroke="#b4b4b4" stroke-width="0.9"/>
<line x1="383.7" y1="364.2" x2="383.7" y2="366.8" stroke="#b4b4b4" stroke-width="0.9"/>
<line x1="390.9" y1="364.2" x2="390.9" y2="366.8" stroke="#b4b4b4" stroke-width="0.9"/>
<line x1="398.1" y1="364.2" x2="398.1" y2="366.8" stroke="#b4b4b4" stroke-width="0.9"/>
<line x1="405.3" y1="364.2" x2="405.3" y2="366.8" stroke="#b4b4b4" stroke-width="0.9"/>
<line x1="412.5" y1="362.9" x2="412.5" y2="368.1" stroke="#b4b4b4" stroke-width="0.9"/>
<line x1="419.7" y1="364.2" x2="419.7" y2="366.8" stroke="#b4b4b4" stroke-width="0.9"/>
<line x1="426.9" y1="364.2" x2="426.9" y2="366.8" stroke="#b4b4b4" stroke-width="0.9"/>
<line x1="434.1" y1="364.2" x2="434.1" y2="366.8" stroke="#b4b4b4" stroke-width="0.9"/>
<line x1="441.3" y1="364.2" x2="441.3" y2="366.8" stroke="#b4b4b4" stroke-width="0.9"/>
<line x1="448.5" y1="362.9" x2="448.5" y2="368.1" stroke="#b4b4b4" stroke-width="0.9"/>
<line x1="455.7" y1="364.2" x2="455.7" y2="366.8" stroke="#b4b4b4" stroke-width="0.9"/>
<line x1="462.9" y1="364.2" x2="462.9" y2="366.8" stroke="#b4b4b4" stroke-width="0.9"/>
<line x1="470.1" y1="364.2" x2="470.1" y2="366.8" stroke="#b4b4b4" stroke-width="0.9"/>
<line x1="477.3" y1="364.2" x2="477.3" y2="366.8" stroke="#b4b4b4" stroke-width="0.9"/>
<line x1="484.5" y1="362.9" x2="484.5" y2="368.1" stroke="#b4b4b4" stroke-width="0.9"/>
<line x1="491.7" y1="364.2" x2="491.7" y2="366.8" stroke="#b4b4b4" stroke-width="0.9"/>
<line x1="498.9" y1="364.2" x2="498.9" y2="366.8" stroke="#b4b4b4" stroke-width="0.9"/>
<line x1="506.1" y1="364.2" x2="506.1" y2="366.8" stroke="#b4b4b4" stroke-width="0.9"/>
<line x1="513.3" y1="364.2" x2="513.3" y2="366.8" stroke="#b4b4b4" stroke-width="0.9"/>
<line x1="520.5" y1="362.9" x2="520.5" y2="368.1" stroke="#b4b4b4" stroke-width="0.9"/>
<line x1="527.7" y1="364.2" x2="527.7" y2="366.8" stroke="#b4b4b4" stroke-width="0.9"/>
<line x1="534.9" y1="364.2" x2="534.9" y2="366.8" stroke="#b4b4b4" stroke-width="0.9"/>
<line x1="542.1" y1="364.2" x2="542.1" y2="366.8" stroke="#b4b4b4" stroke-width="0.9"/>
<line x1="549.3" y1="364.2" x2="549.3" y2="366.8" stroke="#b4b4b4" stroke-width="0.9"/>
<line x1="556.5" y1="362.9" x2="556.5" y2="368.1" stroke="#b4b4b4" stroke-width="0.9"/>
<line x1="563.7" y1="364.2" x2="563.7" y2="366.8" stroke="#b4b4b4" stroke-width="0.9"/>
<line x1="570.9" y1="364.2" x2="570.9" y2="366.8" stroke="#b4b4b4" stroke-width="0.9"/>
<line x1="578.1" y1="364.2" x2="578.1" y2="366.8" stroke="#b4b4b4" stroke-width="0.9"/>
<line x1="585.3" y1="364.2" x2="585.3" y2="366.8" stroke="#b4b4b4" stroke-width="0.9"/>
<line x1="592.5" y1="362.9" x2="592.5" y2="368.1" stroke="#b4b4b4" stroke-width="0.9"/>
<line x1="599.7" y1="364.2" x2="599.7" y2="366.8" stroke="#b4b4b4" stroke-width="0.9"/>
<line x1="606.9" y1="364.2" x2="606.9" y2="366.8" stroke="#b4b4b4" stroke-width="0.9"/>
<line x1="614.1" y1="364.2" x2="614.1" y2="366.8" stroke="#b4b4b4" stroke-width="0.9"/>
<line x1="621.3" y1="364.2" x2="621.3" y2="366.8" stroke="#b4b4b4" stroke-width="0.9"/>
<line x1="628.5" y1="362.9" x2="628.5" y2="368.1" stroke="#b4b4b4" stroke-width="0.9"/>
<line x1="635.7" y1="364.2" x2="635.7" y2="366.8" stroke="#b4b4b4" stroke-width="0.9"/>
<line x1="642.9" y1="364.2" x2="642.9" y2="366.8" stroke="#b4b4b4" stroke-width="0.9"/>
<line x1="650.1" y1="364.2" x2="650.1" y2="366.8" stroke="#b4b4b4" stroke-width="0.9"/>
<line x1="657.3" y1="364.2" x2="657.3" y2="366.8" stroke="#b4b4b4" stroke-width="0.9"/>
<line x1="664.5" y1="362.9" x2="664.5" y2="368.1" stroke="#b4b4b4" stroke-width="0.9"/>
<line x1="671.7" y1="364.2" x2="671.7" y2="366.8" stroke="#b4b4b4" stroke-width="0.9"/>
<line x1="678.9" y1="364.2" x2="678.9" y2="366.8" stroke="#b4b4b4" stroke-width="0.9"/>
<line x1="686.1" y1="364.2" x2="686.1" y2="366.8" stroke="#b4b4b4" stroke-width="0.9"/>
<line x1="693.3" y1="364.2" x2="693.3" y2="366.8" stroke="#b4b4b4" stroke-width="0.9"/>
<line x1="700.5" y1="362.9" x2="700.5" y2="368.1" stroke="#b4b4b4" stroke-width="0.9"/>
<line x1="707.7" y1="364.2" x2="707.7" y2="366.8" stroke="#b4b4b4" stroke-width="0.9"/>
<line x1="714.9" y1="364.2" x2="714.9" y2="366.8" stroke="#b4b4b4" stroke-width="0.9"/>
<line x1="722.1" y1="364.2" x2="722.1" y2="366.8" stroke="#b4b4b4" stroke-width="0.9"/>
<line x1="729.3" y1="364.2" x2="729.3" y2="366.8" stroke="#b4b4b4" stroke-width="0.9"/>
<line x1="736.5" y1="362.9" x2="736.5" y2="368.1" stroke="#b4b4b4" stroke-width="0.9"/>
<line x1="743.7" y1="364.2" x2="743.7" y2="366.8" stroke="#b4b4b4" stroke-width="0.9"/>
<line x1="750.9" y1="364.2" x2="750.9" y2="366.8" stroke="#b4b4b4" stroke-width="0.9"/>
<line x1="758.1" y1="364.2" x2="758.1" y2="366.8" stroke="#b4b4b4" stroke-width="0.9"/>
<line x1="765.3" y1="364.2" x2="765.3" y2="366.8" stroke="#b4b4b4" stroke-width="0.9"/>
<line x1="772.5" y1="362.9" x2="772.5" y2="368.1" stroke="#b4b4b4" stroke-width="0.9"/>
<g clip-path="url(#c2)"><path d="M60.5 260.7 L62.6 259 L65 259.5 L67 261 L69.7 266.4 L72.3 280.4 L75.8 310.3 L77.6 324.4 L79.2 340 L81.9 376.4 L85.5 412.9 L90.4 442 L92.8 450.5 L94.5 455.4 L95 455.9 L104.5 455.9 L105.5 453 L106.2 450.5 L109.8 437 L113.4 412.9 L117 376.4 L120.4 340 L124.2 310.3 L127.7 290 L128.3 289.7 L130.3 296.2 L132.9 310 L135.5 338 L137.7 376 L140.9 412.9 L145 446.9 L147.4 457 L149.4 450.5 L152.3 412.9 L155.9 376.4 L159 341 L161 298 L163.7 275 L166.3 259.3 L168.6 251.4 L170.7 250.5 L172.5 251.4 L176 259.3 L181.3 271.6 L183 277 L186.6 294.5 L189.2 313.8 L191.5 338 L194.8 376.4 L198.4 408 L202 427.4 L203.8 431.8 L205.7 427.4 L208.6 408 L211.8 376.4 L215.5 340.5 L218.2 310.3 L220.8 294.5 L223.1 291.3 L226.1 298 L228.7 310 L231.5 338 L234.9 364.3 L240 406 L244.9 432.3 L250.9 451.7 L254.6 460.2 L257 463.4 L259.4 460.2 L263.1 444.4 L266.7 408 L270.4 364.3 L273 340.5 L274.3 319 L276.9 299.8 L280.1 294.1 L283.1 301.5 L285.4 319 L287 340.5 L288.6 357 L292.2 398.3 L297.1 446.9 L300.7 462.7 L303.2 467.5 L312.9 467.5 L315.3 461.4 L318.9 437.2 L322.6 400.7 L326.2 364.3 L329.3 340.5 L331.4 322.6 L334 308.6 L336.3 303.3 L338.8 308.6 L341 320.9 L343.3 340.5 L346.9 371.6 L350.5 405.6 L354.2 437.2 L357.8 451.7 L361.4 456.1 L365.1 457.3 L368.7 455.4 L372.4 449.3 L376 432.3 L379.7 403.2 L383.3 369.1 L386.3 340.5 L388.5 310.3 L391.2 292.7 L394.7 282.2 L397.3 280.4 L400 283 L404.4 291.9 L409.6 300.6 L414 306.4 L416.7 305 L420 298 L423.5 285.7 L427 280.4 L429.7 278.7 L432.3 285.7 L434.9 299.8 L437.6 315.6 L440.2 333.2 L441.4 340.5 L444.3 371.6 L447.9 400.7 L452.8 427.4 L458.9 451.7 L463.7 465.1 L466.6 468.7 L469.8 463.9 L472.2 449.3 L475.4 412.9 L478.3 383.7 L480.7 354.6 L482.5 340.5 L485 310.3 L487.7 291 L492.1 278.7 L497.3 270.8 L501.7 268.1 L505.3 270.8 L508.8 282.2 L511.4 296.2 L514 313.8 L516.7 339 L519.6 364.3 L522 386.2 L524.4 397.1 L526.4 399.5 L529.3 394.7 L532.2 381.3 L535.4 359.4 L538.2 340.5 L541.3 319.1 L545.7 301.5 L551 292.7 L556.2 283.9 L559.2 281.8 L563.3 291 L565.9 299.8 L568.5 315.6 L571.1 339 L574.2 364.3 L577.4 388.6 L580.3 410.4 L583.2 421.4 L586.4 426.7 L590 425 L593.7 422.6 L597.3 417.7 L600 412.9 L603.6 400.7 L607.3 381.3 L610.9 357 L614.7 340.5 L616.7 334.9 L618.5 330 L620.7 328.8 L622.5 333.2 L624.3 340.5 L626.7 354.6 L629.1 371.6 L631.6 398.3 L634 420.2 L636.4 437.2 L638.9 443.2 L641.8 440.8 L643.7 432.3 L644.9 408 L647.4 381.3 L649.8 357 L651.5 340.5 L652.7 319.1 L654.8 292.7 L657.1 277.8 L659.8 273.4 L661.9 276.9 L664.2 292.7 L666.4 313.8 L668.5 340.5 L671.7 364.3 L674.8 393.4 L677.7 414.1 L678.9 416.5 L681.4 408 L685 386.2 L688.7 364.3 L692.3 344.9 L693 340.5 L696.7 324.4 L702 308.6 L705.5 292.7 L709 276.9 L712.1 267.2 L713.9 266.4 L716 269.9 L719.5 287.5 L722.2 306.8 L723.9 319.1 L724.9 340.5 L727.5 364.3 L731.2 395.9 L734.3 406.1 L737.2 398.3 L740.9 374 L744.5 349.7 L746.2 340.5 L747.7 322.6 L750.3 305 L754.7 291 L760 280.4 L765.2 276.9 L769.6 276 L773.1 285.7 L776.7 299.8 L778.4 310.3 L779.3 320.9" fill="none" stroke="#e8e84c" stroke-width="1.08" stroke-linejoin="round" stroke-linecap="round"/></g>
<rect x="60.5" y="410.5" width="719" height="12" fill="#ae0000"/>
<rect x="60.5" y="410.5" width="719" height="1.3" fill="#d23434"/>
<rect x="60.5" y="422.3" width="719" height="27.3" fill="#9e1a9c"/>
<clipPath id="cb"><rect x="60.5" y="410.5" width="719" height="39.1"/></clipPath>
<g clip-path="url(#cb)"><path d="M60.5 260.7 L62.6 259 L65 259.5 L67 261 L69.7 266.4 L72.3 280.4 L75.8 310.3 L77.6 324.4 L79.2 340 L81.9 376.4 L85.5 412.9 L90.4 442 L92.8 450.5 L94.5 455.4 L95 455.9 L104.5 455.9 L105.5 453 L106.2 450.5 L109.8 437 L113.4 412.9 L117 376.4 L120.4 340 L124.2 310.3 L127.7 290 L128.3 289.7 L130.3 296.2 L132.9 310 L135.5 338 L137.7 376 L140.9 412.9 L145 446.9 L147.4 457 L149.4 450.5 L152.3 412.9 L155.9 376.4 L159 341 L161 298 L163.7 275 L166.3 259.3 L168.6 251.4 L170.7 250.5 L172.5 251.4 L176 259.3 L181.3 271.6 L183 277 L186.6 294.5 L189.2 313.8 L191.5 338 L194.8 376.4 L198.4 408 L202 427.4 L203.8 431.8 L205.7 427.4 L208.6 408 L211.8 376.4 L215.5 340.5 L218.2 310.3 L220.8 294.5 L223.1 291.3 L226.1 298 L228.7 310 L231.5 338 L234.9 364.3 L240 406 L244.9 432.3 L250.9 451.7 L254.6 460.2 L257 463.4 L259.4 460.2 L263.1 444.4 L266.7 408 L270.4 364.3 L273 340.5 L274.3 319 L276.9 299.8 L280.1 294.1 L283.1 301.5 L285.4 319 L287 340.5 L288.6 357 L292.2 398.3 L297.1 446.9 L300.7 462.7 L303.2 467.5 L312.9 467.5 L315.3 461.4 L318.9 437.2 L322.6 400.7 L326.2 364.3 L329.3 340.5 L331.4 322.6 L334 308.6 L336.3 303.3 L338.8 308.6 L341 320.9 L343.3 340.5 L346.9 371.6 L350.5 405.6 L354.2 437.2 L357.8 451.7 L361.4 456.1 L365.1 457.3 L368.7 455.4 L372.4 449.3 L376 432.3 L379.7 403.2 L383.3 369.1 L386.3 340.5 L388.5 310.3 L391.2 292.7 L394.7 282.2 L397.3 280.4 L400 283 L404.4 291.9 L409.6 300.6 L414 306.4 L416.7 305 L420 298 L423.5 285.7 L427 280.4 L429.7 278.7 L432.3 285.7 L434.9 299.8 L437.6 315.6 L440.2 333.2 L441.4 340.5 L444.3 371.6 L447.9 400.7 L452.8 427.4 L458.9 451.7 L463.7 465.1 L466.6 468.7 L469.8 463.9 L472.2 449.3 L475.4 412.9 L478.3 383.7 L480.7 354.6 L482.5 340.5 L485 310.3 L487.7 291 L492.1 278.7 L497.3 270.8 L501.7 268.1 L505.3 270.8 L508.8 282.2 L511.4 296.2 L514 313.8 L516.7 339 L519.6 364.3 L522 386.2 L524.4 397.1 L526.4 399.5 L529.3 394.7 L532.2 381.3 L535.4 359.4 L538.2 340.5 L541.3 319.1 L545.7 301.5 L551 292.7 L556.2 283.9 L559.2 281.8 L563.3 291 L565.9 299.8 L568.5 315.6 L571.1 339 L574.2 364.3 L577.4 388.6 L580.3 410.4 L583.2 421.4 L586.4 426.7 L590 425 L593.7 422.6 L597.3 417.7 L600 412.9 L603.6 400.7 L607.3 381.3 L610.9 357 L614.7 340.5 L616.7 334.9 L618.5 330 L620.7 328.8 L622.5 333.2 L624.3 340.5 L626.7 354.6 L629.1 371.6 L631.6 398.3 L634 420.2 L636.4 437.2 L638.9 443.2 L641.8 440.8 L643.7 432.3 L644.9 408 L647.4 381.3 L649.8 357 L651.5 340.5 L652.7 319.1 L654.8 292.7 L657.1 277.8 L659.8 273.4 L661.9 276.9 L664.2 292.7 L666.4 313.8 L668.5 340.5 L671.7 364.3 L674.8 393.4 L677.7 414.1 L678.9 416.5 L681.4 408 L685 386.2 L688.7 364.3 L692.3 344.9 L693 340.5 L696.7 324.4 L702 308.6 L705.5 292.7 L709 276.9 L712.1 267.2 L713.9 266.4 L716 269.9 L719.5 287.5 L722.2 306.8 L723.9 319.1 L724.9 340.5 L727.5 364.3 L731.2 395.9 L734.3 406.1 L737.2 398.3 L740.9 374 L744.5 349.7 L746.2 340.5 L747.7 322.6 L750.3 305 L754.7 291 L760 280.4 L765.2 276.9 L769.6 276 L773.1 285.7 L776.7 299.8 L778.4 310.3 L779.3 320.9" fill="none" stroke="#ffb070" stroke-width="1.1" stroke-linejoin="round" opacity="0.42"/></g>
<line x1="60.5" y1="422.8" x2="779.5" y2="422.8" stroke="#f038c8" stroke-width="1"/>
<line x1="60.5" y1="434.9" x2="779.5" y2="434.9" stroke="#f848f8" stroke-width="1.3"/>
<line x1="60.5" y1="448.2" x2="779.5" y2="448.2" stroke="#ff44ff" stroke-width="2.6"/>
<line x1="173.3" y1="423" x2="173.3" y2="436" stroke="#ff54ff" stroke-width="1.4"/>
<path d="M171.3 435.5 L175.3 447.5 M175.3 435.5 L171.3 447.5" stroke="#ff54ff" stroke-width="1.5" fill="none"/>
<line x1="362.6" y1="423" x2="362.6" y2="436" stroke="#ff54ff" stroke-width="1.4"/>
<path d="M360.6 435.5 L364.6 447.5 M364.6 435.5 L360.6 447.5" stroke="#ff54ff" stroke-width="1.5" fill="none"/>
<line x1="552.0" y1="423" x2="552.0" y2="436" stroke="#ff54ff" stroke-width="1.4"/>
<path d="M550.0 435.5 L554.0 447.5 M554.0 435.5 L550.0 447.5" stroke="#ff54ff" stroke-width="1.5" fill="none"/>
<line x1="741.3" y1="423" x2="741.3" y2="436" stroke="#ff54ff" stroke-width="1.4"/>
<path d="M739.3 435.5 L743.3 447.5 M743.3 435.5 L739.3 447.5" stroke="#ff54ff" stroke-width="1.5" fill="none"/>
<text x="116.6" y="432.7" font-size="11.6" class="ar" fill="#f0d2f0" text-anchor="middle" textLength="24" lengthAdjust="spacingAndGlyphs">?: 46</text>
<text x="116.8" y="445.6" font-size="11.3" class="ar" fill="#f4dcf4" text-anchor="middle" textLength="18" lengthAdjust="spacingAndGlyphs">00h</text>
<text x="268" y="432.7" font-size="11.6" class="ar" fill="#f0d2f0" text-anchor="middle" textLength="24" lengthAdjust="spacingAndGlyphs">?: 47</text>
<text x="268.2" y="445.6" font-size="11.3" class="ar" fill="#f4dcf4" text-anchor="middle" textLength="18" lengthAdjust="spacingAndGlyphs">00h</text>
<text x="457.6" y="432.7" font-size="11.6" class="ar" fill="#f0d2f0" text-anchor="middle" textLength="24" lengthAdjust="spacingAndGlyphs">?: 48</text>
<text x="457.8" y="445.6" font-size="11.3" class="ar" fill="#f4dcf4" text-anchor="middle" textLength="18" lengthAdjust="spacingAndGlyphs">00h</text>
<text x="647.2" y="432.7" font-size="11.6" class="ar" fill="#f0d2f0" text-anchor="middle" textLength="24" lengthAdjust="spacingAndGlyphs">?: 49</text>
<text x="647.4" y="445.6" font-size="11.3" class="ar" fill="#f4dcf4" text-anchor="middle" textLength="18" lengthAdjust="spacingAndGlyphs">00h</text>
<text x="760.4" y="432.7" font-size="11.6" class="ar" fill="#f0d2f0" text-anchor="middle" textLength="24" lengthAdjust="spacingAndGlyphs">?: 50</text>
<text x="760.6" y="445.6" font-size="11.3" class="ar" fill="#f4dcf4" text-anchor="middle" textLength="18" lengthAdjust="spacingAndGlyphs">00h</text>
<text x="419.3" y="420.8" font-size="11.4" class="ar" fill="#eeb8ac" text-anchor="middle" textLength="51" lengthAdjust="spacingAndGlyphs">Undefined</text>
<rect x="60.5" y="423.4" width="61.5" height="11.6" fill="#6e3a6e" opacity="0.86"/>
<text x="61.3" y="432.6" font-size="7.8" class="ar b" fill="#f6f6f6" textLength="58" lengthAdjust="spacingAndGlyphs">BUS 1:USB3.1</text>
<path d="M760.8 270.4 L764.4 266.1 L779.6 266.1 L779.6 274.7 L764.4 274.7 Z" fill="#0a4c4e" stroke="#36cccc" stroke-width="0.9"/>
<text x="764.8" y="272.7" font-size="6.3" class="ar" fill="#b0f6f6" textLength="10.8" lengthAdjust="spacingAndGlyphs">UA</text>
<path d="M765.2 403.2 L768.8 399 L779.6 399 L779.6 407.4 L768.8 407.4 Z" fill="#0a4c4e" stroke="#36cccc" stroke-width="0.9"/>
<text x="769.2" y="405.5" font-size="6.3" class="ar" fill="#b0f6f6" textLength="9.4" lengthAdjust="spacingAndGlyphs">LA</text>
<path d="M98.5 149.5 L60.5 149.5 L60.5 543.2 L779.5 543.2 L779.5 149.5 L205.5 149.5" fill="none" stroke="#a8a24e" stroke-width="1.1"/>
<line x1="88.5" y1="543.2" x2="88.5" y2="539.8" stroke="#a8a24e" stroke-width="0.9"/>
<line x1="124.5" y1="543.2" x2="124.5" y2="539.8" stroke="#a8a24e" stroke-width="0.9"/>
<line x1="160.5" y1="543.2" x2="160.5" y2="539.8" stroke="#a8a24e" stroke-width="0.9"/>
<line x1="196.5" y1="543.2" x2="196.5" y2="539.8" stroke="#a8a24e" stroke-width="0.9"/>
<line x1="232.5" y1="543.2" x2="232.5" y2="539.8" stroke="#a8a24e" stroke-width="0.9"/>
<line x1="268.5" y1="543.2" x2="268.5" y2="539.8" stroke="#a8a24e" stroke-width="0.9"/>
<line x1="304.5" y1="543.2" x2="304.5" y2="539.8" stroke="#a8a24e" stroke-width="0.9"/>
<line x1="340.5" y1="543.2" x2="340.5" y2="539.8" stroke="#a8a24e" stroke-width="0.9"/>
<line x1="376.5" y1="543.2" x2="376.5" y2="539.8" stroke="#a8a24e" stroke-width="0.9"/>
<line x1="412.5" y1="543.2" x2="412.5" y2="539.8" stroke="#a8a24e" stroke-width="0.9"/>
<line x1="448.5" y1="543.2" x2="448.5" y2="539.8" stroke="#a8a24e" stroke-width="0.9"/>
<line x1="484.5" y1="543.2" x2="484.5" y2="539.8" stroke="#a8a24e" stroke-width="0.9"/>
<line x1="520.5" y1="543.2" x2="520.5" y2="539.8" stroke="#a8a24e" stroke-width="0.9"/>
<line x1="556.5" y1="543.2" x2="556.5" y2="539.8" stroke="#a8a24e" stroke-width="0.9"/>
<line x1="592.5" y1="543.2" x2="592.5" y2="539.8" stroke="#a8a24e" stroke-width="0.9"/>
<line x1="628.5" y1="543.2" x2="628.5" y2="539.8" stroke="#a8a24e" stroke-width="0.9"/>
<line x1="664.5" y1="543.2" x2="664.5" y2="539.8" stroke="#a8a24e" stroke-width="0.9"/>
<line x1="700.5" y1="543.2" x2="700.5" y2="539.8" stroke="#a8a24e" stroke-width="0.9"/>
<line x1="736.5" y1="543.2" x2="736.5" y2="539.8" stroke="#a8a24e" stroke-width="0.9"/>
<line x1="772.5" y1="543.2" x2="772.5" y2="539.8" stroke="#a8a24e" stroke-width="0.9"/>
<line x1="66.9" y1="149.5" x2="66.9" y2="151.5" stroke="#8a8a6a" stroke-width="0.8"/>
<line x1="74.1" y1="149.5" x2="74.1" y2="151.5" stroke="#8a8a6a" stroke-width="0.8"/>
<line x1="81.3" y1="149.5" x2="81.3" y2="151.5" stroke="#8a8a6a" stroke-width="0.8"/>
<line x1="88.5" y1="149.5" x2="88.5" y2="151.5" stroke="#8a8a6a" stroke-width="0.8"/>
<line x1="95.7" y1="149.5" x2="95.7" y2="151.5" stroke="#8a8a6a" stroke-width="0.8"/>
<line x1="210.9" y1="149.5" x2="210.9" y2="151.5" stroke="#8a8a6a" stroke-width="0.8"/>
<line x1="218.1" y1="149.5" x2="218.1" y2="151.5" stroke="#8a8a6a" stroke-width="0.8"/>
<line x1="225.3" y1="149.5" x2="225.3" y2="151.5" stroke="#8a8a6a" stroke-width="0.8"/>
<line x1="232.5" y1="149.5" x2="232.5" y2="151.5" stroke="#8a8a6a" stroke-width="0.8"/>
<line x1="239.7" y1="149.5" x2="239.7" y2="151.5" stroke="#8a8a6a" stroke-width="0.8"/>
<line x1="246.9" y1="149.5" x2="246.9" y2="151.5" stroke="#8a8a6a" stroke-width="0.8"/>
<line x1="254.1" y1="149.5" x2="254.1" y2="151.5" stroke="#8a8a6a" stroke-width="0.8"/>
<line x1="261.3" y1="149.5" x2="261.3" y2="151.5" stroke="#8a8a6a" stroke-width="0.8"/>
<line x1="268.5" y1="149.5" x2="268.5" y2="151.5" stroke="#8a8a6a" stroke-width="0.8"/>
<line x1="275.7" y1="149.5" x2="275.7" y2="151.5" stroke="#8a8a6a" stroke-width="0.8"/>
<line x1="282.9" y1="149.5" x2="282.9" y2="151.5" stroke="#8a8a6a" stroke-width="0.8"/>
<line x1="290.1" y1="149.5" x2="290.1" y2="151.5" stroke="#8a8a6a" stroke-width="0.8"/>
<line x1="297.3" y1="149.5" x2="297.3" y2="151.5" stroke="#8a8a6a" stroke-width="0.8"/>
<line x1="304.5" y1="149.5" x2="304.5" y2="151.5" stroke="#8a8a6a" stroke-width="0.8"/>
<line x1="311.7" y1="149.5" x2="311.7" y2="151.5" stroke="#8a8a6a" stroke-width="0.8"/>
<line x1="318.9" y1="149.5" x2="318.9" y2="151.5" stroke="#8a8a6a" stroke-width="0.8"/>
<line x1="326.1" y1="149.5" x2="326.1" y2="151.5" stroke="#8a8a6a" stroke-width="0.8"/>
<line x1="333.3" y1="149.5" x2="333.3" y2="151.5" stroke="#8a8a6a" stroke-width="0.8"/>
<line x1="340.5" y1="149.5" x2="340.5" y2="151.5" stroke="#8a8a6a" stroke-width="0.8"/>
<line x1="347.7" y1="149.5" x2="347.7" y2="151.5" stroke="#8a8a6a" stroke-width="0.8"/>
<line x1="354.9" y1="149.5" x2="354.9" y2="151.5" stroke="#8a8a6a" stroke-width="0.8"/>
<line x1="362.1" y1="149.5" x2="362.1" y2="151.5" stroke="#8a8a6a" stroke-width="0.8"/>
<line x1="369.3" y1="149.5" x2="369.3" y2="151.5" stroke="#8a8a6a" stroke-width="0.8"/>
<line x1="376.5" y1="149.5" x2="376.5" y2="151.5" stroke="#8a8a6a" stroke-width="0.8"/>
<line x1="383.7" y1="149.5" x2="383.7" y2="151.5" stroke="#8a8a6a" stroke-width="0.8"/>
<line x1="390.9" y1="149.5" x2="390.9" y2="151.5" stroke="#8a8a6a" stroke-width="0.8"/>
<line x1="398.1" y1="149.5" x2="398.1" y2="151.5" stroke="#8a8a6a" stroke-width="0.8"/>
<line x1="405.3" y1="149.5" x2="405.3" y2="151.5" stroke="#8a8a6a" stroke-width="0.8"/>
<line x1="412.5" y1="149.5" x2="412.5" y2="151.5" stroke="#8a8a6a" stroke-width="0.8"/>
<line x1="419.7" y1="149.5" x2="419.7" y2="151.5" stroke="#8a8a6a" stroke-width="0.8"/>
<line x1="426.9" y1="149.5" x2="426.9" y2="151.5" stroke="#8a8a6a" stroke-width="0.8"/>
<line x1="434.1" y1="149.5" x2="434.1" y2="151.5" stroke="#8a8a6a" stroke-width="0.8"/>
<line x1="441.3" y1="149.5" x2="441.3" y2="151.5" stroke="#8a8a6a" stroke-width="0.8"/>
<line x1="448.5" y1="149.5" x2="448.5" y2="151.5" stroke="#8a8a6a" stroke-width="0.8"/>
<line x1="455.7" y1="149.5" x2="455.7" y2="151.5" stroke="#8a8a6a" stroke-width="0.8"/>
<line x1="462.9" y1="149.5" x2="462.9" y2="151.5" stroke="#8a8a6a" stroke-width="0.8"/>
<line x1="470.1" y1="149.5" x2="470.1" y2="151.5" stroke="#8a8a6a" stroke-width="0.8"/>
<line x1="477.3" y1="149.5" x2="477.3" y2="151.5" stroke="#8a8a6a" stroke-width="0.8"/>
<line x1="484.5" y1="149.5" x2="484.5" y2="151.5" stroke="#8a8a6a" stroke-width="0.8"/>
<line x1="491.7" y1="149.5" x2="491.7" y2="151.5" stroke="#8a8a6a" stroke-width="0.8"/>
<line x1="498.9" y1="149.5" x2="498.9" y2="151.5" stroke="#8a8a6a" stroke-width="0.8"/>
<line x1="506.1" y1="149.5" x2="506.1" y2="151.5" stroke="#8a8a6a" stroke-width="0.8"/>
<line x1="513.3" y1="149.5" x2="513.3" y2="151.5" stroke="#8a8a6a" stroke-width="0.8"/>
<line x1="520.5" y1="149.5" x2="520.5" y2="151.5" stroke="#8a8a6a" stroke-width="0.8"/>
<line x1="527.7" y1="149.5" x2="527.7" y2="151.5" stroke="#8a8a6a" stroke-width="0.8"/>
<line x1="534.9" y1="149.5" x2="534.9" y2="151.5" stroke="#8a8a6a" stroke-width="0.8"/>
<line x1="542.1" y1="149.5" x2="542.1" y2="151.5" stroke="#8a8a6a" stroke-width="0.8"/>
<line x1="549.3" y1="149.5" x2="549.3" y2="151.5" stroke="#8a8a6a" stroke-width="0.8"/>
<line x1="556.5" y1="149.5" x2="556.5" y2="151.5" stroke="#8a8a6a" stroke-width="0.8"/>
<line x1="563.7" y1="149.5" x2="563.7" y2="151.5" stroke="#8a8a6a" stroke-width="0.8"/>
<line x1="570.9" y1="149.5" x2="570.9" y2="151.5" stroke="#8a8a6a" stroke-width="0.8"/>
<line x1="578.1" y1="149.5" x2="578.1" y2="151.5" stroke="#8a8a6a" stroke-width="0.8"/>
<line x1="585.3" y1="149.5" x2="585.3" y2="151.5" stroke="#8a8a6a" stroke-width="0.8"/>
<line x1="592.5" y1="149.5" x2="592.5" y2="151.5" stroke="#8a8a6a" stroke-width="0.8"/>
<line x1="599.7" y1="149.5" x2="599.7" y2="151.5" stroke="#8a8a6a" stroke-width="0.8"/>
<line x1="606.9" y1="149.5" x2="606.9" y2="151.5" stroke="#8a8a6a" stroke-width="0.8"/>
<line x1="614.1" y1="149.5" x2="614.1" y2="151.5" stroke="#8a8a6a" stroke-width="0.8"/>
<line x1="621.3" y1="149.5" x2="621.3" y2="151.5" stroke="#8a8a6a" stroke-width="0.8"/>
<line x1="628.5" y1="149.5" x2="628.5" y2="151.5" stroke="#8a8a6a" stroke-width="0.8"/>
<line x1="635.7" y1="149.5" x2="635.7" y2="151.5" stroke="#8a8a6a" stroke-width="0.8"/>
<line x1="642.9" y1="149.5" x2="642.9" y2="151.5" stroke="#8a8a6a" stroke-width="0.8"/>
<line x1="650.1" y1="149.5" x2="650.1" y2="151.5" stroke="#8a8a6a" stroke-width="0.8"/>
<line x1="657.3" y1="149.5" x2="657.3" y2="151.5" stroke="#8a8a6a" stroke-width="0.8"/>
<line x1="664.5" y1="149.5" x2="664.5" y2="151.5" stroke="#8a8a6a" stroke-width="0.8"/>
<line x1="671.7" y1="149.5" x2="671.7" y2="151.5" stroke="#8a8a6a" stroke-width="0.8"/>
<line x1="678.9" y1="149.5" x2="678.9" y2="151.5" stroke="#8a8a6a" stroke-width="0.8"/>
<line x1="686.1" y1="149.5" x2="686.1" y2="151.5" stroke="#8a8a6a" stroke-width="0.8"/>
<line x1="693.3" y1="149.5" x2="693.3" y2="151.5" stroke="#8a8a6a" stroke-width="0.8"/>
<line x1="700.5" y1="149.5" x2="700.5" y2="151.5" stroke="#8a8a6a" stroke-width="0.8"/>
<line x1="707.7" y1="149.5" x2="707.7" y2="151.5" stroke="#8a8a6a" stroke-width="0.8"/>
<line x1="714.9" y1="149.5" x2="714.9" y2="151.5" stroke="#8a8a6a" stroke-width="0.8"/>
<line x1="722.1" y1="149.5" x2="722.1" y2="151.5" stroke="#8a8a6a" stroke-width="0.8"/>
<line x1="729.3" y1="149.5" x2="729.3" y2="151.5" stroke="#8a8a6a" stroke-width="0.8"/>
<line x1="736.5" y1="149.5" x2="736.5" y2="151.5" stroke="#8a8a6a" stroke-width="0.8"/>
<line x1="743.7" y1="149.5" x2="743.7" y2="151.5" stroke="#8a8a6a" stroke-width="0.8"/>
<line x1="750.9" y1="149.5" x2="750.9" y2="151.5" stroke="#8a8a6a" stroke-width="0.8"/>
<line x1="758.1" y1="149.5" x2="758.1" y2="151.5" stroke="#8a8a6a" stroke-width="0.8"/>
<line x1="765.3" y1="149.5" x2="765.3" y2="151.5" stroke="#8a8a6a" stroke-width="0.8"/>
<line x1="772.5" y1="149.5" x2="772.5" y2="151.5" stroke="#8a8a6a" stroke-width="0.8"/>
<line x1="60.5" y1="149.5" x2="64.5" y2="149.5" stroke="#a8a24e" stroke-width="0.9"/>
<line x1="779.5" y1="149.5" x2="775.5" y2="149.5" stroke="#a8a24e" stroke-width="0.9"/>
<line x1="60.5" y1="169.2" x2="63.1" y2="169.2" stroke="#a8a24e" stroke-width="0.9"/>
<line x1="779.5" y1="169.2" x2="776.9" y2="169.2" stroke="#a8a24e" stroke-width="0.9"/>
<line x1="60.5" y1="188.9" x2="64.5" y2="188.9" stroke="#a8a24e" stroke-width="0.9"/>
<line x1="779.5" y1="188.9" x2="775.5" y2="188.9" stroke="#a8a24e" stroke-width="0.9"/>
<line x1="60.5" y1="208.6" x2="63.1" y2="208.6" stroke="#a8a24e" stroke-width="0.9"/>
<line x1="779.5" y1="208.6" x2="776.9" y2="208.6" stroke="#a8a24e" stroke-width="0.9"/>
<line x1="60.5" y1="228.2" x2="64.5" y2="228.2" stroke="#a8a24e" stroke-width="0.9"/>
<line x1="779.5" y1="228.2" x2="775.5" y2="228.2" stroke="#a8a24e" stroke-width="0.9"/>
<line x1="60.5" y1="247.9" x2="63.1" y2="247.9" stroke="#a8a24e" stroke-width="0.9"/>
<line x1="779.5" y1="247.9" x2="776.9" y2="247.9" stroke="#a8a24e" stroke-width="0.9"/>
<line x1="60.5" y1="267.6" x2="64.5" y2="267.6" stroke="#a8a24e" stroke-width="0.9"/>
<line x1="779.5" y1="267.6" x2="775.5" y2="267.6" stroke="#a8a24e" stroke-width="0.9"/>
<line x1="60.5" y1="287.3" x2="63.1" y2="287.3" stroke="#a8a24e" stroke-width="0.9"/>
<line x1="779.5" y1="287.3" x2="776.9" y2="287.3" stroke="#a8a24e" stroke-width="0.9"/>
<line x1="60.5" y1="307" x2="64.5" y2="307" stroke="#a8a24e" stroke-width="0.9"/>
<line x1="779.5" y1="307" x2="775.5" y2="307" stroke="#a8a24e" stroke-width="0.9"/>
<line x1="60.5" y1="326.7" x2="63.1" y2="326.7" stroke="#a8a24e" stroke-width="0.9"/>
<line x1="779.5" y1="326.7" x2="776.9" y2="326.7" stroke="#a8a24e" stroke-width="0.9"/>
<line x1="60.5" y1="346.4" x2="64.5" y2="346.4" stroke="#a8a24e" stroke-width="0.9"/>
<line x1="779.5" y1="346.4" x2="775.5" y2="346.4" stroke="#a8a24e" stroke-width="0.9"/>
<line x1="60.5" y1="366" x2="63.1" y2="366" stroke="#a8a24e" stroke-width="0.9"/>
<line x1="779.5" y1="366" x2="776.9" y2="366" stroke="#a8a24e" stroke-width="0.9"/>
<line x1="60.5" y1="385.7" x2="64.5" y2="385.7" stroke="#a8a24e" stroke-width="0.9"/>
<line x1="779.5" y1="385.7" x2="775.5" y2="385.7" stroke="#a8a24e" stroke-width="0.9"/>
<line x1="60.5" y1="405.4" x2="63.1" y2="405.4" stroke="#a8a24e" stroke-width="0.9"/>
<line x1="779.5" y1="405.4" x2="776.9" y2="405.4" stroke="#a8a24e" stroke-width="0.9"/>
<line x1="60.5" y1="425.1" x2="64.5" y2="425.1" stroke="#a8a24e" stroke-width="0.9"/>
<line x1="779.5" y1="425.1" x2="775.5" y2="425.1" stroke="#a8a24e" stroke-width="0.9"/>
<line x1="60.5" y1="444.8" x2="63.1" y2="444.8" stroke="#a8a24e" stroke-width="0.9"/>
<line x1="779.5" y1="444.8" x2="776.9" y2="444.8" stroke="#a8a24e" stroke-width="0.9"/>
<line x1="60.5" y1="464.5" x2="64.5" y2="464.5" stroke="#a8a24e" stroke-width="0.9"/>
<line x1="779.5" y1="464.5" x2="775.5" y2="464.5" stroke="#a8a24e" stroke-width="0.9"/>
<line x1="60.5" y1="484.1" x2="63.1" y2="484.1" stroke="#a8a24e" stroke-width="0.9"/>
<line x1="779.5" y1="484.1" x2="776.9" y2="484.1" stroke="#a8a24e" stroke-width="0.9"/>
<line x1="60.5" y1="503.8" x2="64.5" y2="503.8" stroke="#a8a24e" stroke-width="0.9"/>
<line x1="779.5" y1="503.8" x2="775.5" y2="503.8" stroke="#a8a24e" stroke-width="0.9"/>
<line x1="60.5" y1="523.5" x2="63.1" y2="523.5" stroke="#a8a24e" stroke-width="0.9"/>
<line x1="779.5" y1="523.5" x2="776.9" y2="523.5" stroke="#a8a24e" stroke-width="0.9"/>
<line x1="60.5" y1="543.2" x2="64.5" y2="543.2" stroke="#a8a24e" stroke-width="0.9"/>
<line x1="779.5" y1="543.2" x2="775.5" y2="543.2" stroke="#a8a24e" stroke-width="0.9"/>
<path d="M60.5 360.6 L69.5 360.6 L74.6 365.5 L69.5 370.2 L60.5 370.2 Z" fill="#4a4a12" stroke="#dede3c" stroke-width="1"/>
<text x="62" y="368" font-size="6.6" class="ar" fill="#e8e8a0">C1</text>
<path d="M441.5 150 L455.7 150 L448.5 160.4 Z" fill="#2fe0ea"/>
<rect x="61.6" y="528.6" width="24.1" height="9.8" fill="#2e2e2e"/>
<text x="62.5" y="536.3" class="ar" font-size="7.3" fill="#d8d8d8">-4.1 ns</text>
<rect x="146.4" y="528.6" width="28.2" height="9.8" fill="#2e2e2e"/>
<text x="147.3" y="536.3" class="ar" font-size="7.3" fill="#d8d8d8">-3.04 ns</text>
<rect x="218.4" y="528.6" width="28.2" height="9.8" fill="#2e2e2e"/>
<text x="219.3" y="536.3" class="ar" font-size="7.3" fill="#d8d8d8">-2.28 ns</text>
<rect x="290.4" y="528.6" width="28.2" height="9.8" fill="#2e2e2e"/>
<text x="291.3" y="536.3" class="ar" font-size="7.3" fill="#d8d8d8">-1.52 ns</text>
<rect x="363.4" y="528.6" width="26.1" height="9.8" fill="#2e2e2e"/>
<text x="364.3" y="536.3" class="ar" font-size="7.3" fill="#d8d8d8">-760 ps</text>
<rect x="442.7" y="528.6" width="11.5" height="9.8" fill="#2e2e2e"/>
<text x="443.6" y="536.3" class="ar" font-size="7.3" fill="#d8d8d8">0 s</text>
<rect x="508.6" y="528.6" width="23.7" height="9.8" fill="#2e2e2e"/>
<text x="509.5" y="536.3" class="ar" font-size="7.3" fill="#d8d8d8">760 ps</text>
<rect x="579.6" y="528.6" width="25.7" height="9.8" fill="#2e2e2e"/>
<text x="580.5" y="536.3" class="ar" font-size="7.3" fill="#d8d8d8">1.52 ns</text>
<rect x="651.6" y="528.6" width="25.7" height="9.8" fill="#2e2e2e"/>
<text x="652.5" y="536.3" class="ar" font-size="7.3" fill="#d8d8d8">2.28 ns</text>
<rect x="723.6" y="528.6" width="25.7" height="9.8" fill="#2e2e2e"/>
<text x="724.5" y="536.3" class="ar" font-size="7.3" fill="#d8d8d8">3.04 ns</text>
<rect x="757.4" y="528.6" width="21.7" height="9.8" fill="#2e2e2e"/>
<text x="758.3" y="536.3" class="ar" font-size="7.3" fill="#d8d8d8">3.5 ns</text>
<path d="M98.5 149.2 Q102.0 149.2 102.0 153.2 L102.0 166.2 Q102.0 171.2 107.5 171.2 L196.5 171.2 Q202.0 171.2 202.0 166.2 L202.0 153.2 Q202.0 149.2 205.5 149.2 Z" fill="#b9b9b9"/>
<text x="109.8" y="165.1" font-size="8.2" class="b" fill="#1c1c1c" textLength="67.8" lengthAdjust="spacingAndGlyphs">Zoom1: Ch1,B1</text>
<rect x="188.4" y="156.6" width="11.2" height="10.4" rx="2.2" fill="url(#redg)" stroke="#8a0a0a" stroke-width="0.7"/>
<path d="M191.2 159.2 L196.8 164.4 M196.8 159.2 L191.2 164.4" stroke="#ffffff" stroke-width="2" stroke-linecap="round"/>
</g>
<g id="status">
<text x="908.6" y="15.2" font-size="8.6" class="b" fill="#e8e8e8" text-anchor="middle" textLength="61.5" lengthAdjust="spacingAndGlyphs">2018-05-30</text>
<text x="908.6" y="27" font-size="8.6" class="b" fill="#e8e8e8" text-anchor="middle" textLength="45" lengthAdjust="spacingAndGlyphs">23:02:06</text>
<g stroke="#289ce0" stroke-width="1.8" fill="none" stroke-linejoin="miter"><path d="M956.1 4.1 L969.6 17.3 L956.1 30.6 L942.7 17.3 Z"/><path d="M962.6 10.9 L949.6 23.8" stroke-width="1.5"/><path d="M956.3 17.4 L962.6 23.8" stroke-width="1.4"/></g>
<text x="953.2" y="16.6" font-size="8" class="ar b" fill="#2aa0dc" text-anchor="middle">R</text>
<text x="959.9" y="22.9" font-size="8" class="ar b" fill="#2aa0dc" text-anchor="middle">S</text>
</g>
<g id="sidepanel">
<rect x="844" y="145" width="128.8" height="399" fill="#242424"/>
<rect x="842.2" y="145" width="2.2" height="399" fill="#a4a4a4"/>
<path d="M786 36 L972.8 36 L972.8 144.6 L792 144.6 Q786 144.6 786 138.6 Z" fill="#4e4e4e"/>
<rect x="787.5" y="37" width="185.3" height="12.2" fill="#050505"/>
<rect x="787.5" y="102.6" width="185.3" height="12.2" fill="#050505"/>
<path d="M972.8 36.6 L786.9 36.6 L786.9 138.6 Q786.9 143.7 792 143.7 L972.8 143.7" fill="none" stroke="#d4d4d4" stroke-width="1.8"/>
<line x1="787.5" y1="49.4" x2="972.8" y2="49.4" stroke="#6c6c6c" stroke-width="0.8"/>
<line x1="787.5" y1="115" x2="972.8" y2="115" stroke="#6c6c6c" stroke-width="0.8"/>
<text x="792.6" y="46.9" font-size="12.5" fill="#ffffff" textLength="64.5" lengthAdjust="spacingAndGlyphs">Horizontal</text>
<text x="789.6" y="59.8" font-size="11.5" fill="#c8c8c8" textLength="31.6" lengthAdjust="spacingAndGlyphs">50 ps</text>
<text x="970.4" y="59.8" font-size="11.5" fill="#c8c8c8" textLength="52" lengthAdjust="spacingAndGlyphs" text-anchor="end">20 GSa/s</text>
<text x="789.6" y="72.7" font-size="11.5" fill="#808080" textLength="31.6" lengthAdjust="spacingAndGlyphs">4 kSa</text>
<text x="969.6" y="72.7" font-size="11.5" fill="#ececec" textLength="16" lengthAdjust="spacingAndGlyphs" text-anchor="end">RT</text>
<text x="789.6" y="85.8" font-size="11.5" fill="#c8c8c8" textLength="53.5" lengthAdjust="spacingAndGlyphs">20 ns/div</text>
<text x="789.6" y="98.7" font-size="11.5" fill="#c8c8c8" textLength="17" lengthAdjust="spacingAndGlyphs">0 s</text>
<text x="793.8" y="112.6" font-size="12.5" fill="#ffffff" textLength="46" lengthAdjust="spacingAndGlyphs">Trigger</text>
<text x="970.4" y="112.6" font-size="12" fill="#2fa466" textLength="41" lengthAdjust="spacingAndGlyphs" text-anchor="end">Normal</text>
<text x="790.6" y="126.5" font-size="11.5" fill="#c8c8c8" textLength="11.5" lengthAdjust="spacingAndGlyphs">A:</text>
<text x="828.4" y="126.5" font-size="11.5" fill="#c8c8c8" textLength="26.2" lengthAdjust="spacingAndGlyphs">Runt</text>
<path d="M861.8 128 L869.2 128 L869.2 116.6 L874.8 116.6" fill="none" stroke="#d4d4d4" stroke-width="1.5"/>
<path d="M865.9 124.4 L869.2 119.4 L872.5 124.4" fill="none" stroke="#d4d4d4" stroke-width="1.4"/>
<text x="877.2" y="126.5" font-size="11.5" fill="#dcdc3c" textLength="20" lengthAdjust="spacingAndGlyphs">Ch1</text>
<text x="790.4" y="139.3" font-size="11.5" fill="#c8c8c8" textLength="33.6" lengthAdjust="spacingAndGlyphs">Level:</text>
<text x="828.4" y="139.3" font-size="11.5" fill="#c8c8c8" textLength="62" lengthAdjust="spacingAndGlyphs">298.72 mV</text>
<rect x="787.4" y="160" width="170.8" height="62.2" rx="4.5" fill="#000000" stroke="#5e5e5e" stroke-width="1"/>
<rect x="786.8" y="155.9" width="172" height="13.7" rx="6" fill="#f6ee1e"/>
<text x="861.8" y="166.8" font-size="12.5" fill="#1c1a00" textLength="60" lengthAdjust="spacingAndGlyphs" text-anchor="middle">Ch1Wfm1</text>
<rect x="937.2" y="158" width="18.6" height="9.4" rx="3" fill="url(#blug)" stroke="#1a3a7a" stroke-width="1"/>
<rect x="941.8000000000001" y="161.9" width="9.4" height="2" rx="0.6" fill="#ffffff"/>
<text x="788.8" y="181.3" font-size="11.5" fill="#c8c8c8" textLength="66" lengthAdjust="spacingAndGlyphs">200 mV/div</text>
<text x="874.4" y="181.3" font-size="11.5" fill="#c8c8c8" textLength="18" lengthAdjust="spacingAndGlyphs">DM</text>
<text x="788.8" y="193.5" font-size="11.5" fill="#808080" textLength="28" lengthAdjust="spacingAndGlyphs">0 div</text>
<text x="874.4" y="193.5" font-size="11.5" fill="#c8c8c8" textLength="18.6" lengthAdjust="spacingAndGlyphs">0 V</text>
<text x="788.8" y="205.7" font-size="11.5" fill="#c8c8c8" textLength="43.5" lengthAdjust="spacingAndGlyphs">DC 50Ω</text>
<text x="874.4" y="205.7" font-size="11.5" fill="#c8c8c8" textLength="61" lengthAdjust="spacingAndGlyphs">BW: 6 GHz</text>
<text x="788.8" y="217.9" font-size="11.5" fill="#c8c8c8" textLength="42" lengthAdjust="spacingAndGlyphs">Sample</text>
<rect x="787.4" y="238" width="170.8" height="61.8" rx="4.5" fill="#1b1b1b" stroke="#aaaaaa" stroke-width="1.1"/>
<rect x="786.8" y="233.7" width="172" height="13.5" rx="6" fill="#b8b8b8"/>
<text x="862" y="244.4" font-size="12.5" fill="#141414" textLength="51" lengthAdjust="spacingAndGlyphs" text-anchor="middle">SerBus1</text>
<rect x="937.2" y="235.8" width="18.6" height="9.4" rx="3" fill="url(#blug)" stroke="#1a3a7a" stroke-width="1"/>
<rect x="941.8000000000001" y="239.70000000000002" width="9.4" height="2" rx="0.6" fill="#ffffff"/>
<text x="789.8" y="270.8" font-size="11.5" fill="#f2f2f2" textLength="33" lengthAdjust="spacingAndGlyphs">Type:</text>
<text x="825.6" y="270.8" font-size="11.5" fill="#f2f2f2" textLength="45.4" lengthAdjust="spacingAndGlyphs">USB3.1</text>
<text x="789.2" y="283.4" font-size="11.5" fill="#c8c8c8" textLength="28.6" lengthAdjust="spacingAndGlyphs">Data:</text>
<text x="823.4" y="283.4" font-size="11.5" fill="#c8c8c8" textLength="32.6" lengthAdjust="spacingAndGlyphs">C1W1</text>
</g>
</svg></body></html>
